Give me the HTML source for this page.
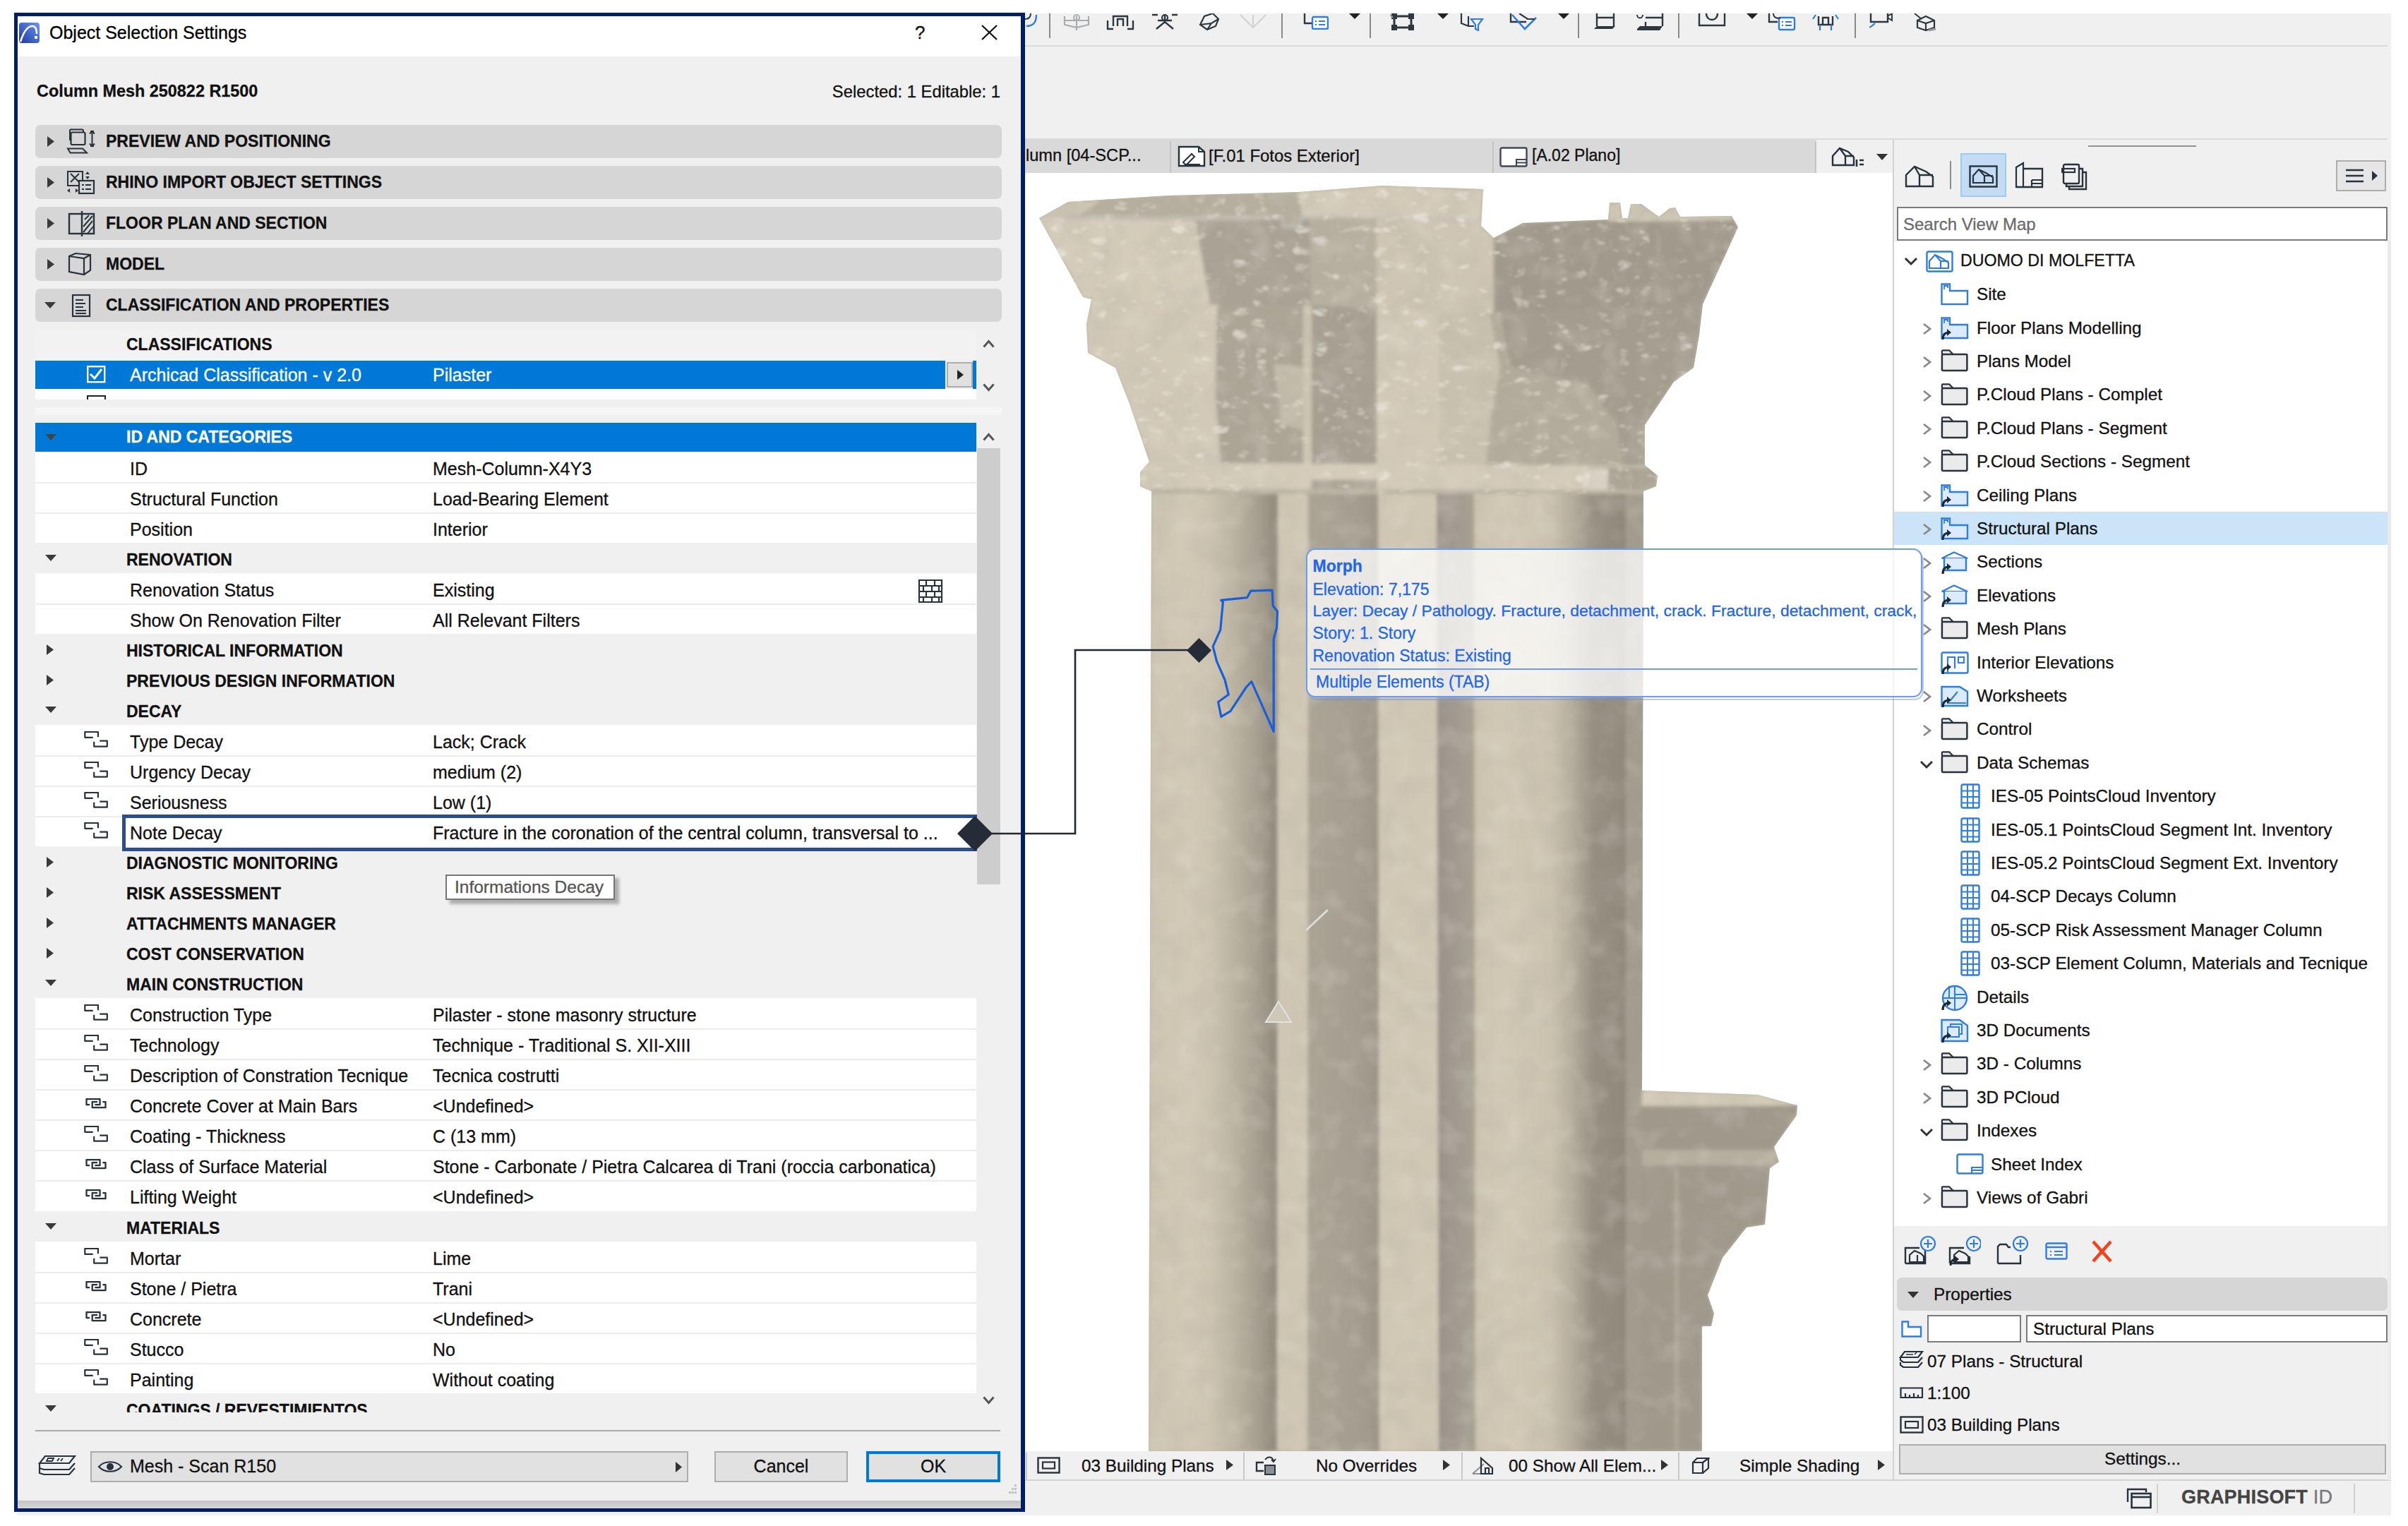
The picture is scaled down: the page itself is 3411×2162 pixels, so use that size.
<!DOCTYPE html>
<html><head><meta charset="utf-8"><style>
*{margin:0;padding:0;box-sizing:border-box}
html,body{width:3411px;height:2162px;overflow:hidden;background:#fff}
body{position:relative;font-family:"Liberation Sans",sans-serif;color:#000}
.a{position:absolute;display:block}
.t{position:absolute;white-space:nowrap;line-height:1;-webkit-text-stroke:0.3px currentColor}
</style></head><body>
<div class="a" style="left:24px;top:19px;width:3363px;height:2128px;background:#f0f0f0"></div>
<div class="a" style="left:1452px;top:64px;width:1930px;height:2px;background:#d9d9d9"></div>
<div class="a" style="left:1452px;top:196px;width:1930px;height:2px;background:#dadada"></div>
<div class="a" style="left:1452px;top:196px;width:1120px;height:49px;background:#d9d9d9"></div>
<div class="a" style="left:1657px;top:200px;width:2px;height:45px;background:#c4c4c4"></div>
<div class="a" style="left:2114px;top:200px;width:2px;height:45px;background:#c4c4c4"></div>
<div class="a" style="left:2571px;top:200px;width:2px;height:45px;background:#c4c4c4"></div>
<div class="a" style="left:1452px;top:245px;width:1230px;height:1811px;background:#ffffff"></div>
<div class="a" style="left:1452px;top:2056px;width:1230px;height:41px;background:#f0f0f0"></div>
<div class="a" style="left:1452px;top:2096px;width:1935px;height:2px;background:#d4d4d4"></div>
<div class="a" style="left:1453px;top:2058px;width:2px;height:38px;background:#c8c8c8"></div>
<div class="a" style="left:1761px;top:2058px;width:2px;height:38px;background:#c8c8c8"></div>
<div class="a" style="left:2070px;top:2058px;width:2px;height:38px;background:#c8c8c8"></div>
<div class="a" style="left:2377px;top:2058px;width:2px;height:38px;background:#c8c8c8"></div>
<div class="a" style="left:2681px;top:198px;width:2px;height:1899px;background:#d2d2d2"></div>
<div class="a" style="left:3382px;top:341px;width:5px;height:1756px;background:#ebebeb"></div>
<svg class="a" style="left:1452px;top:245px;" width="1230" height="1811" viewBox="1452 245 1230 1811"><defs>
<clipPath id="silc"><polygon points="1472,309 1513,286 1656,277 1840,272 1958,263 2101,268 2098,320 2116,337 2157,316 2278,311 2280,287 2295,287 2298,309 2306,309 2310,289 2325,289 2340,300 2350,307 2365,295 2373,294 2380,307 2453,306 2462,322 2412,431 2407,475 2399,521 2371,541 2330,602 2330,659 2348,674 2346,689 2328,696 2326,1545 2490,1551 2546,1566 2545,1580 2513,1625 2520,1646 2507,1655 2500,1735 2474,1739 2440,1782 2419,1835 2428,1861 2424,1879 2411,1879 2411,2056 1627,2056 1631,696 1615,689 1615,669 1628,654 1600,572 1580,521 1541,500 1539,459 1546,424 1534,421"/></clipPath>
<linearGradient id="cylL" x1="0" x2="1" y1="0" y2="0">
 <stop offset="0" stop-color="#cdc4b1"/><stop offset="0.3" stop-color="#d2c9b6"/><stop offset="0.47" stop-color="#cdc4b1"/><stop offset="0.64" stop-color="#bdb5a3"/><stop offset="0.82" stop-color="#a8a192"/><stop offset="0.95" stop-color="#948e81"/><stop offset="1" stop-color="#918b7e"/></linearGradient>
<linearGradient id="cylR" x1="0" x2="1" y1="0" y2="0">
 <stop offset="0" stop-color="#cbc2af"/><stop offset="0.2" stop-color="#d1c8b5"/><stop offset="0.5" stop-color="#cbc2af"/><stop offset="0.65" stop-color="#b3ac9c"/><stop offset="0.78" stop-color="#958f82"/><stop offset="1" stop-color="#8f897c"/></linearGradient>
<linearGradient id="darkS2" x1="0" x2="1" y1="0" y2="0">
 <stop offset="0" stop-color="#98928a"/><stop offset="1" stop-color="#a7a193"/></linearGradient>
<linearGradient id="darkS" x1="0" x2="1" y1="0" y2="0">
 <stop offset="0" stop-color="#aaa495"/><stop offset="0.7" stop-color="#a39d8f"/><stop offset="1" stop-color="#9a9488"/></linearGradient>
<filter id="tex" x="1452" y="245" width="1230" height="1811" filterUnits="userSpaceOnUse">
 <feTurbulence type="fractalNoise" baseFrequency="0.022" numOctaves="2" seed="7" result="n"/>
 <feColorMatrix in="n" type="matrix" values="0 0 0 0 0.45  0 0 0 0 0.42  0 0 0 0 0.37  1.6 0 0 0 -0.72" result="dk"/>
 <feComposite in="dk" in2="SourceAlpha" operator="in"/>
</filter>
<filter id="tex2" x="1452" y="245" width="1230" height="1811" filterUnits="userSpaceOnUse">
 <feTurbulence type="fractalNoise" baseFrequency="0.03" numOctaves="2" seed="21" result="n"/>
 <feColorMatrix in="n" type="matrix" values="0 0 0 0 0.88  0 0 0 0 0.85  0 0 0 0 0.78  0 1.6 0 0 -0.78" result="lt"/>
 <feComposite in="lt" in2="SourceAlpha" operator="in"/>
</filter>
<clipPath id="capc"><polygon points="1452,245 2682,245 2682,700 1452,700"/></clipPath>
<filter id="leafL" x="1452" y="245" width="1230" height="460" filterUnits="userSpaceOnUse">
 <feTurbulence type="turbulence" baseFrequency="0.035 0.06" numOctaves="2" seed="11" result="n"/>
 <feColorMatrix in="n" type="matrix" values="0 0 0 0 0.86  0 0 0 0 0.83  0 0 0 0 0.76  0 0 3.2 0 -1.25" result="lt"/>
 <feGaussianBlur stdDeviation="1.2"/>
 <feComposite in2="SourceAlpha" operator="in"/>
</filter>
<filter id="leafD" x="1452" y="245" width="1230" height="460" filterUnits="userSpaceOnUse">
 <feTurbulence type="turbulence" baseFrequency="0.05 0.03" numOctaves="2" seed="5" result="n"/>
 <feColorMatrix in="n" type="matrix" values="0 0 0 0 0.55  0 0 0 0 0.52  0 0 0 0 0.47  0 3.0 0 0 -1.2" result="dk"/>
 <feGaussianBlur stdDeviation="1.2"/>
 <feComposite in2="SourceAlpha" operator="in"/>
</filter>
<filter id="soft" x="1452" y="245" width="1230" height="1811" filterUnits="userSpaceOnUse"><feGaussianBlur stdDeviation="2.5"/></filter>
</defs><polygon points="1472,309 1513,286 1656,277 1840,272 1958,263 2101,268 2098,320 2116,337 2157,316 2278,311 2280,287 2295,287 2298,309 2306,309 2310,289 2325,289 2340,300 2350,307 2365,295 2373,294 2380,307 2453,306 2462,322 2412,431 2407,475 2399,521 2371,541 2330,602 2330,659 2348,674 2346,689 2328,696 2326,1545 2490,1551 2546,1566 2545,1580 2513,1625 2520,1646 2507,1655 2500,1735 2474,1739 2440,1782 2419,1835 2428,1861 2424,1879 2411,1879 2411,2056 1627,2056 1631,696 1615,689 1615,669 1628,654 1600,572 1580,521 1541,500 1539,459 1546,424 1534,421" fill="#c0b8a7" /><g clip-path="url(#silc)"><g filter="url(#soft)"><polygon points="1631,690 1811,690 1811,2056 1627,2056" fill="url(#cylL)" /><polygon points="1810,690 1853,690 1852,2056 1809,2056" fill="#cfc6b3" /><polygon points="1853,690 1953,690 1955,2056 1852,2056" fill="url(#darkS)" /><polygon points="1952,690 2037,690 2040,2056 1954,2056" fill="#d0c7b4" /><polygon points="2035,690 2088,690 2090,2056 2038,2056" fill="url(#darkS2)" /><polygon points="2088,690 2304,690 2304,2056 2090,2056" fill="url(#cylR)" /><polygon points="2303,690 2330,690 2330,2056 2303,2056" fill="#a29c8e" /><polygon points="2324,1560 2546,1566 2545,1580 2513,1625 2520,1646 2507,1655 2500,1735 2474,1739 2440,1782 2419,1835 2428,1861 2424,1879 2411,1879 2411,2056 2324,2056" fill="#9f998c" /><polygon points="2326,1545 2490,1551 2546,1566 2470,1567 2326,1567" fill="#d2c9b6" /><polygon points="2326,1629 2516,1629 2516,1651 2326,1651" fill="#b6af9f" /><polygon points="2372,1655 2378,1655 2378,2056 2372,2056" fill="#aea898" /><polygon points="1546,424 2412,431 2407,475 2399,521 2371,541 2330,602 2330,659 2348,674 2346,689 2328,696 1631,696 1615,689 1615,669 1628,654 1600,572 1580,521 1541,500 1539,459" fill="#d2c9b7" /><polygon points="1724,430 1850,430 1850,662 1730,662 1722,560" fill="#aba596" /><polygon points="1846,430 1858,430 1858,662 1846,662" fill="#cdc5b3" /><polygon points="1804,515 1846,520 1846,610 1815,600" fill="#c2baa9" /><polygon points="1858,430 1950,432 1950,662 1858,662" fill="#a5a092" /><polygon points="1950,432 2038,434 2038,662 1950,662" fill="#d2c9b7" /><polygon points="2038,434 2124,440 2140,520 2300,540 2300,664 2038,664" fill="#b2ab9b" /><polygon points="2124,440 2412,431 2407,475 2399,521 2371,541 2330,602 2330,659 2300,664 2290,600 2250,545 2140,520" fill="#a39d8f" /><polygon points="2038,440 2110,445 2125,520 2112,590 2105,664 2038,664" fill="#c9c1af" /><polygon points="1615,655 2346,660 2348,674 2346,689 2328,696 1631,696 1615,689" fill="#d4cbb9" /><polygon points="1858,680 1950,680 1950,697 1858,697" fill="#aaa496" /><polygon points="2249,662 2346,662 2348,674 2346,689 2328,696 2249,696" fill="#aba596" /><polygon points="2242,664 2278,664 2278,694 2242,694" fill="#d8d2c4" /><polygon points="1631,692 2330,694 2330,700 1631,700" fill="#bcb5a5" /><polygon points="1472,309 1694,313 1714,432 1534,421" fill="#d4cbb9" /><polygon points="1694,313 1855,311 1858,432 1714,432" fill="#a9a395" /><polygon points="1855,311 1950,309 1950,438 1858,432" fill="#b7b0a0" /><polygon points="1950,309 2098,310 2098,320 2116,337 2116,444 1950,438" fill="#cec5b3" /><polygon points="2116,337 2157,316 2453,306 2462,322 2412,431 2116,444" fill="#a09a8c" /><polygon points="1472,309 1513,286 1656,277 1840,272 1958,263 2101,268 2098,310 1845,306 1840,322 1817,322 1817,306 1628,309" fill="#b6af9f" /><polygon points="1838,272 1958,263 2101,268 2098,310 1845,306" fill="#d3cab7" /><polygon points="1472,309 1513,286 1560,284 1530,305" fill="#cdc4b1" /><polygon points="2278,311 2280,287 2295,287 2298,309 2306,309 2310,289 2325,289 2340,300 2350,307 2365,295 2373,294 2380,307 2453,306 2453,312 2278,314" fill="#cec6b3" /><polyline points="1472,309 1585,306 1628,309 1817,306 1817,322 1840,322 1845,306 2098,310" fill="none" stroke="#c6c6c6" stroke-width="2"/></g></g><g clip-path="url(#silc)"><rect x="1452" y="245" width="1230" height="1811" fill="#000" filter="url(#tex)" opacity="0.35"/></g><g clip-path="url(#silc)"><rect x="1452" y="245" width="1230" height="1811" fill="#000" filter="url(#tex2)" opacity="0.3"/></g><g clip-path="url(#silc)"><g clip-path="url(#capc)"><rect x="1452" y="245" width="1230" height="460" fill="#000" filter="url(#leafL)" opacity="0.6"/><rect x="1452" y="245" width="1230" height="460" fill="#000" filter="url(#leafD)" opacity="0.35"/></g></g></svg>
<div class="a" style="left:20px;top:18px;width:1432px;height:2124px;background:#021f60"></div>
<div class="a" style="left:25px;top:23px;width:1421px;height:57px;background:#ffffff"></div>
<div class="a" style="left:25px;top:80px;width:1421px;height:2046px;background:#f0f0f0"></div>
<div class="a" style="left:25px;top:2126px;width:1421px;height:11px;background:linear-gradient(#c4c4c4,#d6d6d6)"></div>
<svg class="a" style="left:26px;top:31px;" width="31" height="31" viewBox="0 0 31 31"><defs><linearGradient id="tig" x1="0" y1="1" x2="1" y2="0"><stop offset="0" stop-color="#1c3aa8"/><stop offset="1" stop-color="#6d95f0"/></linearGradient></defs><rect x="1" y="1" width="29" height="29" rx="4" fill="url(#tig)"/><path d="M3,28 C8,12 14,6 20,6 C25,6 26,12 26,17" fill="none" stroke="#fff" stroke-width="2.6"/><rect x="23" y="20" width="4" height="4" fill="#fff"/></svg>
<div class="t" style="left:70px;top:34.1px;font-size:25px;font-weight:400;color:#000;">Object Selection Settings</div>
<div class="t" style="left:1296px;top:32.9px;font-size:26px;font-weight:400;color:#111;">?</div>
<svg class="a" style="left:1390px;top:35px;" width="23" height="22" viewBox="0 0 23 22"><path d="M1,1 L22,21 M22,1 L1,21" stroke="#111" stroke-width="2.2"/></svg>
<div class="t" style="left:52px;top:117.7px;font-size:23.4px;font-weight:700;color:#111;">Column Mesh 250822 R1500</div>
<div class="t" style="right:1994px;top:117.7px;font-size:23.8px;font-weight:400;color:#111;">Selected: 1 Editable: 1</div>
<div class="a" style="left:50px;top:177px;width:1369px;height:47px;background:#d6d6d6;border-radius:7px"></div>
<svg class="a" style="left:67px;top:192.5px;" width="10" height="15" viewBox="0 0 10 15"><polygon points="0,0 10,7.5 0,15" fill="#3a3a3a"/></svg>
<div class="t" style="left:150px;top:189.4px;font-size:23px;font-weight:700;color:#111;">PREVIEW AND POSITIONING</div>
<div class="a" style="left:50px;top:235px;width:1369px;height:47px;background:#d6d6d6;border-radius:7px"></div>
<svg class="a" style="left:67px;top:250.5px;" width="10" height="15" viewBox="0 0 10 15"><polygon points="0,0 10,7.5 0,15" fill="#3a3a3a"/></svg>
<div class="t" style="left:150px;top:247.4px;font-size:23px;font-weight:700;color:#111;">RHINO IMPORT OBJECT SETTINGS</div>
<div class="a" style="left:50px;top:293px;width:1369px;height:47px;background:#d6d6d6;border-radius:7px"></div>
<svg class="a" style="left:67px;top:308.5px;" width="10" height="15" viewBox="0 0 10 15"><polygon points="0,0 10,7.5 0,15" fill="#3a3a3a"/></svg>
<div class="t" style="left:150px;top:305.4px;font-size:23px;font-weight:700;color:#111;">FLOOR PLAN AND SECTION</div>
<div class="a" style="left:50px;top:351px;width:1369px;height:47px;background:#d6d6d6;border-radius:7px"></div>
<svg class="a" style="left:67px;top:366.5px;" width="10" height="15" viewBox="0 0 10 15"><polygon points="0,0 10,7.5 0,15" fill="#3a3a3a"/></svg>
<div class="t" style="left:150px;top:363.4px;font-size:23px;font-weight:700;color:#111;">MODEL</div>
<div class="a" style="left:50px;top:409px;width:1369px;height:47px;background:#d6d6d6;border-radius:7px"></div>
<svg class="a" style="left:62.5px;top:427.5px;" width="16" height="9" viewBox="0 0 16 9"><polygon points="0,0 16,0 8.0,9" fill="#3a3a3a"/></svg>
<div class="t" style="left:150px;top:421.4px;font-size:23px;font-weight:700;color:#111;">CLASSIFICATION AND PROPERTIES</div>
<svg class="a" style="left:94px;top:182px;" width="44" height="37" viewBox="0 0 44 37"><path d="M5,17 V3 Q5,1.5 6.5,1.5 H22 Q24,1.5 24,3.5 V5" fill="none" stroke="#27323c" stroke-width="2"/><rect x="6.5" y="5.5" width="20" height="17.5" rx="2" fill="none" stroke="#27323c" stroke-width="2.2"/><path d="M2,28.5 H23 L29,34.5 H5.5 Z" fill="none" stroke="#27323c" stroke-width="2"/><path d="M36.5,4 V25 M33,7.5 L36.5,4 L40,7.5 M33,21.5 L36.5,25 L40,21.5 M34,4 H39 M34,25 H39" fill="none" stroke="#27323c" stroke-width="2"/></svg>
<svg class="a" style="left:94px;top:241px;" width="42" height="36" viewBox="0 0 42 36"><path d="M2,2 H23 V22 H2 Z M6,5 L18,17 M18,5 L6,17" fill="none" stroke="#27323c" stroke-width="2"/><rect x="18" y="15" width="21" height="18" fill="#d6d6d6" stroke="#27323c" stroke-width="2.2"/><path d="M22,21 H25 M27,21 H35 M22,27 H25 M27,27 H35" stroke="#27323c" stroke-width="2"/><path d="M30,2 L33,6 H27 Z M27,9 H33 L30,13 Z M1,29 L5,26 V32 Z M13,26 L17,29 L13,32 Z" fill="#27323c"/></svg>
<svg class="a" style="left:96px;top:299px;" width="40" height="36" viewBox="0 0 40 36"><rect x="2" y="4" width="35" height="28" fill="none" stroke="#27323c" stroke-width="2.4"/><path d="M20,0 V36" stroke="#27323c" stroke-width="2.4"/><path d="M22,30 L35,14 M22,22 L35,7 M24,12 L30,6 M28,32 L36,22" stroke="#27323c" stroke-width="2"/></svg>
<svg class="a" style="left:96px;top:357px;" width="36" height="34" viewBox="0 0 36 34"><path d="M2,6 L11,2 L32,4 V26 L23,32 L2,28 Z M2,6 L23,9 L32,4 M23,9 V32" fill="none" stroke="#27323c" stroke-width="2.2"/></svg>
<svg class="a" style="left:101px;top:416px;" width="28" height="34" viewBox="0 0 28 34"><rect x="2" y="2" width="24" height="30" fill="none" stroke="#27323c" stroke-width="2.2"/><path d="M6,9 H17 M6,14 H20 M6,19 H17 M6,24 H21 M6,28 H21" stroke="#27323c" stroke-width="2"/></svg>
<div class="a" style="left:50px;top:467px;width:1333px;height:44px;background:#f2f2f2"></div>
<div class="t" style="left:179px;top:477.4px;font-size:23px;font-weight:700;color:#111;">CLASSIFICATIONS</div>
<div class="a" style="left:50px;top:511px;width:1289px;height:40px;background:#0078d7"></div>
<div class="a" style="left:1378px;top:511px;width:5px;height:40px;background:#0078d7"></div>
<div class="a" style="left:1341px;top:513px;width:37px;height:36px;background:#e1e1e1;border:2px solid #adadad"></div>
<svg class="a" style="left:1356px;top:524.0px;" width="9" height="14" viewBox="0 0 9 14"><polygon points="0,0 9,7.0 0,14" fill="#222"/></svg>
<svg class="a" style="left:123px;top:518px;" width="27" height="25" viewBox="0 0 27 25"><rect x="1.2" y="1.2" width="24" height="22" fill="none" stroke="#fff" stroke-width="2.4"/><path d="M5,12 L11,18 L21,5" fill="none" stroke="#fff" stroke-width="3"/></svg>
<div class="t" style="left:184px;top:519.1px;font-size:25px;font-weight:400;color:#fff;">Archicad Classification - v 2.0</div>
<div class="t" style="left:613px;top:519.1px;font-size:25px;font-weight:400;color:#fff;">Pilaster</div>
<div class="a" style="left:50px;top:551px;width:1333px;height:15px;background:#fff"></div>
<div class="a" style="left:123px;top:560px;width:27px;height:6px;border:2px solid #222;border-bottom:none"></div>
<svg class="a" style="left:1392px;top:481px;" width="17" height="12" viewBox="0 0 17 12"><polyline points="1.5,10.5 8.5,2.5 15.5,10.5" fill="none" stroke="#555" stroke-width="3"/></svg>
<svg class="a" style="left:1392px;top:543px;" width="17" height="12" viewBox="0 0 17 12"><polyline points="1.5,1.5 8.5,9.5 15.5,1.5" fill="none" stroke="#555" stroke-width="3"/></svg>
<div class="a" style="left:50px;top:577px;width:1369px;height:11px;background:#f6f6f6"></div>
<div class="a" style="left:50px;top:599px;width:1333px;height:41px;background:#0078d7"></div>
<svg class="a" style="left:64.0px;top:615px;" width="16" height="9" viewBox="0 0 16 9"><polygon points="0,0 16,0 8.0,9" fill="#444"/></svg>
<div class="t" style="left:179px;top:608.4px;font-size:23px;font-weight:700;color:#fff;">ID AND CATEGORIES</div>
<div class="a" style="left:50px;top:640px;width:1333px;height:43px;background:#fff"></div>
<div class="t" style="left:184px;top:651.9px;font-size:25px;font-weight:400;color:#111;">ID</div>
<div class="t" style="left:613px;top:651.9px;font-size:25px;font-weight:400;color:#111;">Mesh-Column-X4Y3</div>
<div class="a" style="left:50px;top:683px;width:1333px;height:43px;background:#fff"></div>
<div class="a" style="left:50px;top:683px;width:1333px;height:2px;background:#ececec"></div>
<div class="t" style="left:184px;top:694.9px;font-size:25px;font-weight:400;color:#111;">Structural Function</div>
<div class="t" style="left:613px;top:694.9px;font-size:25px;font-weight:400;color:#111;">Load-Bearing Element</div>
<div class="a" style="left:50px;top:726px;width:1333px;height:43px;background:#fff"></div>
<div class="a" style="left:50px;top:726px;width:1333px;height:2px;background:#ececec"></div>
<div class="t" style="left:184px;top:737.9px;font-size:25px;font-weight:400;color:#111;">Position</div>
<div class="t" style="left:613px;top:737.9px;font-size:25px;font-weight:400;color:#111;">Interior</div>
<div class="a" style="left:50px;top:769px;width:1333px;height:43px;background:#f0f0f0"></div>
<svg class="a" style="left:64.0px;top:786px;" width="16" height="9" viewBox="0 0 16 9"><polygon points="0,0 16,0 8.0,9" fill="#3a3a3a"/></svg>
<div class="t" style="left:179px;top:781.9px;font-size:23px;font-weight:700;color:#111;">RENOVATION</div>
<div class="a" style="left:50px;top:812px;width:1333px;height:43px;background:#fff"></div>
<div class="t" style="left:184px;top:823.9px;font-size:25px;font-weight:400;color:#111;">Renovation Status</div>
<div class="t" style="left:613px;top:823.9px;font-size:25px;font-weight:400;color:#111;">Existing</div>
<div class="a" style="left:50px;top:855px;width:1333px;height:43px;background:#fff"></div>
<div class="a" style="left:50px;top:855px;width:1333px;height:2px;background:#ececec"></div>
<div class="t" style="left:184px;top:866.9px;font-size:25px;font-weight:400;color:#111;">Show On Renovation Filter</div>
<div class="t" style="left:613px;top:866.9px;font-size:25px;font-weight:400;color:#111;">All Relevant Filters</div>
<div class="a" style="left:50px;top:898px;width:1333px;height:43px;background:#f0f0f0"></div>
<svg class="a" style="left:66px;top:912.5px;" width="10" height="15" viewBox="0 0 10 15"><polygon points="0,0 10,7.5 0,15" fill="#3a3a3a"/></svg>
<div class="t" style="left:179px;top:910.9px;font-size:23px;font-weight:700;color:#111;">HISTORICAL INFORMATION</div>
<div class="a" style="left:50px;top:941px;width:1333px;height:43px;background:#f0f0f0"></div>
<svg class="a" style="left:66px;top:955.5px;" width="10" height="15" viewBox="0 0 10 15"><polygon points="0,0 10,7.5 0,15" fill="#3a3a3a"/></svg>
<div class="t" style="left:179px;top:953.9px;font-size:23px;font-weight:700;color:#111;">PREVIOUS DESIGN INFORMATION</div>
<div class="a" style="left:50px;top:984px;width:1333px;height:43px;background:#f0f0f0"></div>
<svg class="a" style="left:64.0px;top:1001px;" width="16" height="9" viewBox="0 0 16 9"><polygon points="0,0 16,0 8.0,9" fill="#3a3a3a"/></svg>
<div class="t" style="left:179px;top:996.9px;font-size:23px;font-weight:700;color:#111;">DECAY</div>
<div class="a" style="left:50px;top:1027px;width:1333px;height:43px;background:#fff"></div>
<div class="t" style="left:184px;top:1038.9px;font-size:25px;font-weight:400;color:#111;">Type Decay</div>
<div class="t" style="left:613px;top:1038.9px;font-size:25px;font-weight:400;color:#111;">Lack; Crack</div>
<svg class="a" style="left:118px;top:1036px;" width="36" height="24" viewBox="0 0 36 24"><path d="M13.7,8.8 H2.3 V1 H20.9 V8.3 M23.3,13.6 H33.8 V21.6 H15.2 V14.7" fill="none" stroke="#27323c" stroke-width="2.2" stroke-linejoin="round"/></svg>
<div class="a" style="left:50px;top:1070px;width:1333px;height:43px;background:#fff"></div>
<div class="a" style="left:50px;top:1070px;width:1333px;height:2px;background:#ececec"></div>
<div class="t" style="left:184px;top:1081.9px;font-size:25px;font-weight:400;color:#111;">Urgency Decay</div>
<div class="t" style="left:613px;top:1081.9px;font-size:25px;font-weight:400;color:#111;">medium (2)</div>
<svg class="a" style="left:118px;top:1079px;" width="36" height="24" viewBox="0 0 36 24"><path d="M13.7,8.8 H2.3 V1 H20.9 V8.3 M23.3,13.6 H33.8 V21.6 H15.2 V14.7" fill="none" stroke="#27323c" stroke-width="2.2" stroke-linejoin="round"/></svg>
<div class="a" style="left:50px;top:1113px;width:1333px;height:43px;background:#fff"></div>
<div class="a" style="left:50px;top:1113px;width:1333px;height:2px;background:#ececec"></div>
<div class="t" style="left:184px;top:1124.9px;font-size:25px;font-weight:400;color:#111;">Seriousness</div>
<div class="t" style="left:613px;top:1124.9px;font-size:25px;font-weight:400;color:#111;">Low (1)</div>
<svg class="a" style="left:118px;top:1122px;" width="36" height="24" viewBox="0 0 36 24"><path d="M13.7,8.8 H2.3 V1 H20.9 V8.3 M23.3,13.6 H33.8 V21.6 H15.2 V14.7" fill="none" stroke="#27323c" stroke-width="2.2" stroke-linejoin="round"/></svg>
<div class="a" style="left:50px;top:1156px;width:1333px;height:43px;background:#fff"></div>
<div class="a" style="left:50px;top:1156px;width:1333px;height:2px;background:#ececec"></div>
<div class="t" style="left:184px;top:1167.9px;font-size:25px;font-weight:400;color:#111;">Note Decay</div>
<div class="t" style="left:613px;top:1167.9px;font-size:25px;font-weight:400;color:#111;">Fracture in the coronation of the central column, transversal to ...</div>
<svg class="a" style="left:118px;top:1165px;" width="36" height="24" viewBox="0 0 36 24"><path d="M13.7,8.8 H2.3 V1 H20.9 V8.3 M23.3,13.6 H33.8 V21.6 H15.2 V14.7" fill="none" stroke="#27323c" stroke-width="2.2" stroke-linejoin="round"/></svg>
<div class="a" style="left:50px;top:1199px;width:1333px;height:43px;background:#f0f0f0"></div>
<svg class="a" style="left:66px;top:1213.5px;" width="10" height="15" viewBox="0 0 10 15"><polygon points="0,0 10,7.5 0,15" fill="#3a3a3a"/></svg>
<div class="t" style="left:179px;top:1211.9px;font-size:23px;font-weight:700;color:#111;">DIAGNOSTIC MONITORING</div>
<div class="a" style="left:50px;top:1242px;width:1333px;height:43px;background:#f0f0f0"></div>
<svg class="a" style="left:66px;top:1256.5px;" width="10" height="15" viewBox="0 0 10 15"><polygon points="0,0 10,7.5 0,15" fill="#3a3a3a"/></svg>
<div class="t" style="left:179px;top:1254.9px;font-size:23px;font-weight:700;color:#111;">RISK ASSESSMENT</div>
<div class="a" style="left:50px;top:1285px;width:1333px;height:43px;background:#f0f0f0"></div>
<svg class="a" style="left:66px;top:1299.5px;" width="10" height="15" viewBox="0 0 10 15"><polygon points="0,0 10,7.5 0,15" fill="#3a3a3a"/></svg>
<div class="t" style="left:179px;top:1297.9px;font-size:23px;font-weight:700;color:#111;">ATTACHMENTS MANAGER</div>
<div class="a" style="left:50px;top:1328px;width:1333px;height:43px;background:#f0f0f0"></div>
<svg class="a" style="left:66px;top:1342.5px;" width="10" height="15" viewBox="0 0 10 15"><polygon points="0,0 10,7.5 0,15" fill="#3a3a3a"/></svg>
<div class="t" style="left:179px;top:1340.9px;font-size:23px;font-weight:700;color:#111;">COST CONSERVATION</div>
<div class="a" style="left:50px;top:1371px;width:1333px;height:43px;background:#f0f0f0"></div>
<svg class="a" style="left:64.0px;top:1388px;" width="16" height="9" viewBox="0 0 16 9"><polygon points="0,0 16,0 8.0,9" fill="#3a3a3a"/></svg>
<div class="t" style="left:179px;top:1383.9px;font-size:23px;font-weight:700;color:#111;">MAIN CONSTRUCTION</div>
<div class="a" style="left:50px;top:1414px;width:1333px;height:43px;background:#fff"></div>
<div class="t" style="left:184px;top:1425.9px;font-size:25px;font-weight:400;color:#111;">Construction Type</div>
<div class="t" style="left:613px;top:1425.9px;font-size:25px;font-weight:400;color:#111;">Pilaster - stone masonry structure</div>
<svg class="a" style="left:118px;top:1423px;" width="36" height="24" viewBox="0 0 36 24"><path d="M13.7,8.8 H2.3 V1 H20.9 V8.3 M23.3,13.6 H33.8 V21.6 H15.2 V14.7" fill="none" stroke="#27323c" stroke-width="2.2" stroke-linejoin="round"/></svg>
<div class="a" style="left:50px;top:1457px;width:1333px;height:43px;background:#fff"></div>
<div class="a" style="left:50px;top:1457px;width:1333px;height:2px;background:#ececec"></div>
<div class="t" style="left:184px;top:1468.9px;font-size:25px;font-weight:400;color:#111;">Technology</div>
<div class="t" style="left:613px;top:1468.9px;font-size:25px;font-weight:400;color:#111;">Technique - Traditional S. XII-XIII</div>
<svg class="a" style="left:118px;top:1466px;" width="36" height="24" viewBox="0 0 36 24"><path d="M13.7,8.8 H2.3 V1 H20.9 V8.3 M23.3,13.6 H33.8 V21.6 H15.2 V14.7" fill="none" stroke="#27323c" stroke-width="2.2" stroke-linejoin="round"/></svg>
<div class="a" style="left:50px;top:1500px;width:1333px;height:43px;background:#fff"></div>
<div class="a" style="left:50px;top:1500px;width:1333px;height:2px;background:#ececec"></div>
<div class="t" style="left:184px;top:1511.9px;font-size:25px;font-weight:400;color:#111;">Description of Constration Tecnique</div>
<div class="t" style="left:613px;top:1511.9px;font-size:25px;font-weight:400;color:#111;">Tecnica costrutti</div>
<svg class="a" style="left:118px;top:1509px;" width="36" height="24" viewBox="0 0 36 24"><path d="M13.7,8.8 H2.3 V1 H20.9 V8.3 M23.3,13.6 H33.8 V21.6 H15.2 V14.7" fill="none" stroke="#27323c" stroke-width="2.2" stroke-linejoin="round"/></svg>
<div class="a" style="left:50px;top:1543px;width:1333px;height:43px;background:#fff"></div>
<div class="a" style="left:50px;top:1543px;width:1333px;height:2px;background:#ececec"></div>
<div class="t" style="left:184px;top:1554.9px;font-size:25px;font-weight:400;color:#111;">Concrete Cover at Main Bars</div>
<div class="t" style="left:613px;top:1554.9px;font-size:25px;font-weight:400;color:#111;">&lt;Undefined&gt;</div>
<svg class="a" style="left:120px;top:1555px;" width="32" height="17" viewBox="0 0 32 17"><path d="M7,10.2 H2.5 V2.2 H21.5 V10.2 H14.4 M18,6.1 H10.7 V14.2 H29.5 V6.1 H25.4" fill="none" stroke="#27323c" stroke-width="2.3" stroke-linejoin="round"/></svg>
<div class="a" style="left:50px;top:1586px;width:1333px;height:43px;background:#fff"></div>
<div class="a" style="left:50px;top:1586px;width:1333px;height:2px;background:#ececec"></div>
<div class="t" style="left:184px;top:1597.9px;font-size:25px;font-weight:400;color:#111;">Coating - Thickness</div>
<div class="t" style="left:613px;top:1597.9px;font-size:25px;font-weight:400;color:#111;">C (13 mm)</div>
<svg class="a" style="left:118px;top:1595px;" width="36" height="24" viewBox="0 0 36 24"><path d="M13.7,8.8 H2.3 V1 H20.9 V8.3 M23.3,13.6 H33.8 V21.6 H15.2 V14.7" fill="none" stroke="#27323c" stroke-width="2.2" stroke-linejoin="round"/></svg>
<div class="a" style="left:50px;top:1629px;width:1333px;height:43px;background:#fff"></div>
<div class="a" style="left:50px;top:1629px;width:1333px;height:2px;background:#ececec"></div>
<div class="t" style="left:184px;top:1640.9px;font-size:25px;font-weight:400;color:#111;">Class of Surface Material</div>
<div class="t" style="left:613px;top:1640.9px;font-size:25px;font-weight:400;color:#111;">Stone - Carbonate / Pietra Calcarea di Trani (roccia carbonatica)</div>
<svg class="a" style="left:120px;top:1641px;" width="32" height="17" viewBox="0 0 32 17"><path d="M7,10.2 H2.5 V2.2 H21.5 V10.2 H14.4 M18,6.1 H10.7 V14.2 H29.5 V6.1 H25.4" fill="none" stroke="#27323c" stroke-width="2.3" stroke-linejoin="round"/></svg>
<div class="a" style="left:50px;top:1672px;width:1333px;height:44px;background:#fff"></div>
<div class="a" style="left:50px;top:1672px;width:1333px;height:2px;background:#ececec"></div>
<div class="t" style="left:184px;top:1683.9px;font-size:25px;font-weight:400;color:#111;">Lifting Weight</div>
<div class="t" style="left:613px;top:1683.9px;font-size:25px;font-weight:400;color:#111;">&lt;Undefined&gt;</div>
<svg class="a" style="left:120px;top:1684px;" width="32" height="17" viewBox="0 0 32 17"><path d="M7,10.2 H2.5 V2.2 H21.5 V10.2 H14.4 M18,6.1 H10.7 V14.2 H29.5 V6.1 H25.4" fill="none" stroke="#27323c" stroke-width="2.3" stroke-linejoin="round"/></svg>
<div class="a" style="left:50px;top:1716px;width:1333px;height:43px;background:#f0f0f0"></div>
<svg class="a" style="left:64.0px;top:1733px;" width="16" height="9" viewBox="0 0 16 9"><polygon points="0,0 16,0 8.0,9" fill="#3a3a3a"/></svg>
<div class="t" style="left:179px;top:1728.9px;font-size:23px;font-weight:700;color:#111;">MATERIALS</div>
<div class="a" style="left:50px;top:1759px;width:1333px;height:43px;background:#fff"></div>
<div class="t" style="left:184px;top:1770.9px;font-size:25px;font-weight:400;color:#111;">Mortar</div>
<div class="t" style="left:613px;top:1770.9px;font-size:25px;font-weight:400;color:#111;">Lime</div>
<svg class="a" style="left:118px;top:1768px;" width="36" height="24" viewBox="0 0 36 24"><path d="M13.7,8.8 H2.3 V1 H20.9 V8.3 M23.3,13.6 H33.8 V21.6 H15.2 V14.7" fill="none" stroke="#27323c" stroke-width="2.2" stroke-linejoin="round"/></svg>
<div class="a" style="left:50px;top:1802px;width:1333px;height:43px;background:#fff"></div>
<div class="a" style="left:50px;top:1802px;width:1333px;height:2px;background:#ececec"></div>
<div class="t" style="left:184px;top:1813.9px;font-size:25px;font-weight:400;color:#111;">Stone / Pietra</div>
<div class="t" style="left:613px;top:1813.9px;font-size:25px;font-weight:400;color:#111;">Trani</div>
<svg class="a" style="left:120px;top:1814px;" width="32" height="17" viewBox="0 0 32 17"><path d="M7,10.2 H2.5 V2.2 H21.5 V10.2 H14.4 M18,6.1 H10.7 V14.2 H29.5 V6.1 H25.4" fill="none" stroke="#27323c" stroke-width="2.3" stroke-linejoin="round"/></svg>
<div class="a" style="left:50px;top:1845px;width:1333px;height:43px;background:#fff"></div>
<div class="a" style="left:50px;top:1845px;width:1333px;height:2px;background:#ececec"></div>
<div class="t" style="left:184px;top:1856.9px;font-size:25px;font-weight:400;color:#111;">Concrete</div>
<div class="t" style="left:613px;top:1856.9px;font-size:25px;font-weight:400;color:#111;">&lt;Undefined&gt;</div>
<svg class="a" style="left:120px;top:1857px;" width="32" height="17" viewBox="0 0 32 17"><path d="M7,10.2 H2.5 V2.2 H21.5 V10.2 H14.4 M18,6.1 H10.7 V14.2 H29.5 V6.1 H25.4" fill="none" stroke="#27323c" stroke-width="2.3" stroke-linejoin="round"/></svg>
<div class="a" style="left:50px;top:1888px;width:1333px;height:43px;background:#fff"></div>
<div class="a" style="left:50px;top:1888px;width:1333px;height:2px;background:#ececec"></div>
<div class="t" style="left:184px;top:1899.9px;font-size:25px;font-weight:400;color:#111;">Stucco</div>
<div class="t" style="left:613px;top:1899.9px;font-size:25px;font-weight:400;color:#111;">No</div>
<svg class="a" style="left:118px;top:1897px;" width="36" height="24" viewBox="0 0 36 24"><path d="M13.7,8.8 H2.3 V1 H20.9 V8.3 M23.3,13.6 H33.8 V21.6 H15.2 V14.7" fill="none" stroke="#27323c" stroke-width="2.2" stroke-linejoin="round"/></svg>
<div class="a" style="left:50px;top:1931px;width:1333px;height:43px;background:#fff"></div>
<div class="a" style="left:50px;top:1931px;width:1333px;height:2px;background:#ececec"></div>
<div class="t" style="left:184px;top:1942.9px;font-size:25px;font-weight:400;color:#111;">Painting</div>
<div class="t" style="left:613px;top:1942.9px;font-size:25px;font-weight:400;color:#111;">Without coating</div>
<svg class="a" style="left:118px;top:1940px;" width="36" height="24" viewBox="0 0 36 24"><path d="M13.7,8.8 H2.3 V1 H20.9 V8.3 M23.3,13.6 H33.8 V21.6 H15.2 V14.7" fill="none" stroke="#27323c" stroke-width="2.2" stroke-linejoin="round"/></svg>
<div class="a" style="left:50px;top:1974px;width:1333px;height:27px;background:#f0f0f0"></div>
<svg class="a" style="left:64.0px;top:1991px;" width="16" height="9" viewBox="0 0 16 9"><polygon points="0,0 16,0 8.0,9" fill="#3a3a3a"/></svg>
<div class="t" style="left:179px;top:1986.9px;font-size:23px;font-weight:700;color:#111;">COATINGS / REVESTIMIENTOS</div>
<div class="a" style="left:50px;top:2001px;width:1369px;height:26px;background:#f0f0f0"></div>
<svg class="a" style="left:1300px;top:820px;" width="36" height="35" viewBox="0 0 36 35"><path d="M2,2 H34 V33 H2 Z M2,10 H34 M2,18 H34 M2,26 H34 M12,2 V10 M24,2 V10 M8,10 V18 M20,10 V18 M30,10 V18 M12,18 V26 M24,18 V26 M8,26 V33 M20,26 V33 M30,26 V33" fill="none" stroke="#27323c" stroke-width="2.2"/></svg>
<svg class="a" style="left:1392px;top:613px;" width="17" height="12" viewBox="0 0 17 12"><polyline points="1.5,10.5 8.5,2.5 15.5,10.5" fill="none" stroke="#555" stroke-width="3"/></svg>
<div class="a" style="left:1384px;top:635px;width:33px;height:618px;background:#cdcdcd"></div>
<svg class="a" style="left:1392px;top:1978px;" width="17" height="12" viewBox="0 0 17 12"><polyline points="1.5,1.5 8.5,9.5 15.5,1.5" fill="none" stroke="#555" stroke-width="3"/></svg>
<div class="a" style="left:173px;top:1154px;width:1211px;height:52px;border:5px solid #2d4d8c;border-right:none"></div>
<div class="a" style="left:50px;top:2026px;width:1367px;height:2px;background:#a8a8a8"></div>
<svg class="a" style="left:54px;top:2060px;" width="54" height="33" viewBox="0 0 54 33"><path d="M10,3 H52 L44,13 H2 Z" fill="none" stroke="#27323c" stroke-width="2.2"/><path d="M2,13 V20 L8,22 H44 L52,13 M2,20 V27 L8,29 H44 L52,20" fill="none" stroke="#27323c" stroke-width="2.2"/><path d="M14,6 H22 L20,10 H12 Z M27,10 L30,6 M32,10 L35,6" fill="none" stroke="#27323c" stroke-width="1.8"/></svg>
<div class="a" style="left:128px;top:2056px;width:847px;height:44px;background:#e1e1e1;border:2px solid #adadad"></div>
<svg class="a" style="left:138px;top:2067px;" width="36" height="22" viewBox="0 0 36 22"><path d="M2,11 C10,2 26,2 34,11 C26,20 10,20 2,11 Z" fill="none" stroke="#27323c" stroke-width="2.2"/><circle cx="18" cy="11" r="5" fill="#27323c"/></svg>
<div class="t" style="left:184px;top:2065.4px;font-size:25px;font-weight:400;color:#111;">Mesh - Scan R150</div>
<svg class="a" style="left:957px;top:2070.5px;" width="9" height="15" viewBox="0 0 9 15"><polygon points="0,0 9,7.5 0,15" fill="#333"/></svg>
<div class="a" style="left:1012px;top:2056px;width:189px;height:44px;background:#e1e1e1;border:2px solid #adadad"></div>
<div class="t" style="left:1012.0px;width:189px;text-align:center;top:2065.4px;font-size:25px;font-weight:400;color:#111;">Cancel</div>
<div class="a" style="left:1227px;top:2056px;width:190px;height:44px;background:#e1e1e1;border:4px solid #0078d7"></div>
<div class="t" style="left:1227.0px;width:190px;text-align:center;top:2065.4px;font-size:25px;font-weight:400;color:#111;">OK</div>
<svg class="a" style="left:1424px;top:2102px;" width="18" height="18" viewBox="0 0 18 18"><g fill="#c0c0c0"><rect x="13" y="1" width="3" height="3"/><rect x="9" y="6" width="3" height="3"/><rect x="13" y="6" width="3" height="3"/><rect x="5" y="11" width="3" height="3"/><rect x="9" y="11" width="3" height="3"/><rect x="13" y="11" width="3" height="3"/></g></svg>
<svg class="a" style="left:2698px;top:234px;" width="42" height="32" viewBox="0 0 42 32"><path d="M2,30 V14 L14,2 L30,9 L40,16 V30 Z M21,30 V14 L14,2 M21,14 H40" fill="none" stroke="#27323c" stroke-width="2.4"/></svg>
<div class="a" style="left:2762px;top:228px;width:2px;height:40px;background:#8d8d8d"></div>
<div class="a" style="left:2777px;top:217px;width:65px;height:62px;background:#c3dcf3;border:2px solid #99cbf6"></div>
<svg class="a" style="left:2789px;top:234px;" width="42" height="32" viewBox="0 0 42 32"><rect x="1.5" y="1.5" width="38" height="29" fill="none" stroke="#27323c" stroke-width="2.4"/><path d="M6,25 V15 L14,6 L24,11 L34,17 V25 Z M22,25 V15 L14,6 M22,15 H34" fill="none" stroke="#27323c" stroke-width="2.2"/></svg>
<svg class="a" style="left:2854px;top:229px;" width="42" height="38" viewBox="0 0 42 38"><path d="M2,8 L12,2 V36 L2,36 Z" fill="none" stroke="#27323c" stroke-width="2.2"/><path d="M12,10 H39 V36 H2" fill="none" stroke="#27323c" stroke-width="2.4"/><path d="M24,26 H39 M24,31 H39 M24,26 V36" stroke="#27323c" stroke-width="2.2"/></svg>
<svg class="a" style="left:2920px;top:231px;" width="40" height="40" viewBox="0 0 40 40"><rect x="3" y="2" width="22" height="27" rx="2" fill="none" stroke="#27323c" stroke-width="2.4"/><path d="M7,29 V33 H30 V8 H25 M11,33 V37 H35 V13 H30" fill="none" stroke="#27323c" stroke-width="2.4"/><rect x="1" y="8" width="18" height="5" fill="none" stroke="#27323c" stroke-width="2.2"/></svg>
<div class="a" style="left:2958px;top:206px;width:153px;height:2px;background:#939393"></div>
<div class="a" style="left:3309px;top:227px;width:71px;height:44px;background:#e6e6e6;border:2px solid #adadad"></div>
<svg class="a" style="left:3322px;top:238px;" width="50" height="22" viewBox="0 0 50 22"><path d="M1,3 H26 M1,11 H26 M1,19 H26" stroke="#27323c" stroke-width="2.4"/><polygon points="38,4 46,11 38,18" fill="#27323c"/></svg>
<div class="a" style="left:2687px;top:293px;width:695px;height:48px;background:#fff;border:2px solid #7a7a7a"></div>
<div class="t" style="left:2696px;top:305.9px;font-size:24px;font-weight:400;color:#6b6b6b;">Search View Map</div>
<div class="a" style="left:2683px;top:341px;width:699px;height:1396px;background:#fff"></div>
<div class="a" style="left:3382px;top:341px;width:5px;height:1396px;background:#e9e9e9"></div>
<div class="a" style="left:2683px;top:725px;width:699px;height:47px;background:#cce4f7"></div>
<svg class="a" style="left:2697px;top:363.0px;" width="20" height="14" viewBox="0 0 20 14"><polyline points="2,3 10,11 18,3" fill="none" stroke="#333" stroke-width="3"/></svg>
<svg class="a" style="left:2728px;top:355.0px;" width="40" height="31" viewBox="0 0 40 31"><rect x="1.5" y="1.5" width="36" height="28" rx="2" fill="#fff" stroke="#2f7de1" stroke-width="2.4"/><path d="M5,25 V15 L13,6 L23,11 L32,17 V25 Z M21,25 V15 L13,6 M21,15 H32" fill="none" stroke="#2f7de1" stroke-width="2.2"/></svg>
<div class="t" style="left:2777px;top:358.3px;font-size:23.2px;font-weight:400;color:#111;">DUOMO DI MOLFETTA</div>
<svg class="a" style="left:2749px;top:401.4px;" width="40" height="32" viewBox="0 0 40 32"><path d="M1.5,30 V1.5 H13 V11 H38 V30 Z" fill="#fff" stroke="#2f7de1" stroke-width="2.4"/><path d="M5,9 V4 H10 V7" fill="none" stroke="#2f7de1" stroke-width="1.8"/></svg>
<div class="t" style="left:2800px;top:405.1px;font-size:24.3px;font-weight:400;color:#111;">Site</div>
<svg class="a" style="left:2723px;top:456.8px;" width="14" height="18" viewBox="0 0 14 18"><polyline points="2,2 11,9 2,16" fill="none" stroke="#8a8a8a" stroke-width="2.8"/></svg>
<svg class="a" style="left:2749px;top:448.8px;" width="40" height="32" viewBox="0 0 40 32"><path d="M1.5,30 V1.5 H13 V11 H38 V30 Z" fill="#dcebfb" stroke="#2f7de1" stroke-width="2.4"/><path d="M5,9 V4 H10 V7" fill="none" stroke="#2f7de1" stroke-width="1.8"/></svg>
<svg class="a" style="left:2749px;top:465.8px;" width="16" height="16" viewBox="0 0 16 16"><path d="M3,15 C3,8 6,5 12,5" fill="none" stroke="#1e2a33" stroke-width="3.2"/><polygon points="9,0 15,5 9,10" fill="#1e2a33"/></svg>
<div class="t" style="left:2800px;top:452.5px;font-size:24.3px;font-weight:400;color:#111;">Floor Plans Modelling</div>
<svg class="a" style="left:2723px;top:504.20000000000005px;" width="14" height="18" viewBox="0 0 14 18"><polyline points="2,2 11,9 2,16" fill="none" stroke="#8a8a8a" stroke-width="2.8"/></svg>
<svg class="a" style="left:2749px;top:495.20000000000005px;" width="40" height="32" viewBox="0 0 40 32"><path d="M1.9,7 V2.5 Q1.9,1.4 3,1.4 H12.3 L17.6,7" fill="#ebebeb" stroke="#27323c" stroke-width="2.2" stroke-linejoin="round"/><rect x="1.9" y="7" width="35.5" height="23" rx="1.2" fill="#ebebeb" stroke="#27323c" stroke-width="2.5"/></svg>
<div class="t" style="left:2800px;top:499.9px;font-size:24.3px;font-weight:400;color:#111;">Plans Model</div>
<svg class="a" style="left:2723px;top:551.6px;" width="14" height="18" viewBox="0 0 14 18"><polyline points="2,2 11,9 2,16" fill="none" stroke="#8a8a8a" stroke-width="2.8"/></svg>
<svg class="a" style="left:2749px;top:542.6px;" width="40" height="32" viewBox="0 0 40 32"><path d="M1.9,7 V2.5 Q1.9,1.4 3,1.4 H12.3 L17.6,7" fill="#ebebeb" stroke="#27323c" stroke-width="2.2" stroke-linejoin="round"/><rect x="1.9" y="7" width="35.5" height="23" rx="1.2" fill="#ebebeb" stroke="#27323c" stroke-width="2.5"/></svg>
<div class="t" style="left:2800px;top:547.3px;font-size:24.3px;font-weight:400;color:#111;">P.Cloud Plans - Complet</div>
<svg class="a" style="left:2723px;top:599.0px;" width="14" height="18" viewBox="0 0 14 18"><polyline points="2,2 11,9 2,16" fill="none" stroke="#8a8a8a" stroke-width="2.8"/></svg>
<svg class="a" style="left:2749px;top:590.0px;" width="40" height="32" viewBox="0 0 40 32"><path d="M1.9,7 V2.5 Q1.9,1.4 3,1.4 H12.3 L17.6,7" fill="#ebebeb" stroke="#27323c" stroke-width="2.2" stroke-linejoin="round"/><rect x="1.9" y="7" width="35.5" height="23" rx="1.2" fill="#ebebeb" stroke="#27323c" stroke-width="2.5"/></svg>
<div class="t" style="left:2800px;top:594.7px;font-size:24.3px;font-weight:400;color:#111;">P.Cloud Plans - Segment</div>
<svg class="a" style="left:2723px;top:646.4px;" width="14" height="18" viewBox="0 0 14 18"><polyline points="2,2 11,9 2,16" fill="none" stroke="#8a8a8a" stroke-width="2.8"/></svg>
<svg class="a" style="left:2749px;top:637.4px;" width="40" height="32" viewBox="0 0 40 32"><path d="M1.9,7 V2.5 Q1.9,1.4 3,1.4 H12.3 L17.6,7" fill="#ebebeb" stroke="#27323c" stroke-width="2.2" stroke-linejoin="round"/><rect x="1.9" y="7" width="35.5" height="23" rx="1.2" fill="#ebebeb" stroke="#27323c" stroke-width="2.5"/></svg>
<div class="t" style="left:2800px;top:642.1px;font-size:24.3px;font-weight:400;color:#111;">P.Cloud Sections - Segment</div>
<svg class="a" style="left:2723px;top:693.8px;" width="14" height="18" viewBox="0 0 14 18"><polyline points="2,2 11,9 2,16" fill="none" stroke="#8a8a8a" stroke-width="2.8"/></svg>
<svg class="a" style="left:2749px;top:685.8px;" width="40" height="32" viewBox="0 0 40 32"><path d="M1.5,30 V1.5 H13 V11 H38 V30 Z" fill="#dcebfb" stroke="#2f7de1" stroke-width="2.4"/><path d="M5,9 V4 H10 V7" fill="none" stroke="#2f7de1" stroke-width="1.8"/></svg>
<svg class="a" style="left:2749px;top:702.8px;" width="16" height="16" viewBox="0 0 16 16"><path d="M3,15 C3,8 6,5 12,5" fill="none" stroke="#1e2a33" stroke-width="3.2"/><polygon points="9,0 15,5 9,10" fill="#1e2a33"/></svg>
<div class="t" style="left:2800px;top:689.5px;font-size:24.3px;font-weight:400;color:#111;">Ceiling Plans</div>
<svg class="a" style="left:2723px;top:741.2px;" width="14" height="18" viewBox="0 0 14 18"><polyline points="2,2 11,9 2,16" fill="none" stroke="#8a8a8a" stroke-width="2.8"/></svg>
<svg class="a" style="left:2749px;top:733.2px;" width="40" height="32" viewBox="0 0 40 32"><path d="M1.5,30 V1.5 H13 V11 H38 V30 Z" fill="#dcebfb" stroke="#2f7de1" stroke-width="2.4"/><path d="M5,9 V4 H10 V7" fill="none" stroke="#2f7de1" stroke-width="1.8"/></svg>
<svg class="a" style="left:2749px;top:750.2px;" width="16" height="16" viewBox="0 0 16 16"><path d="M3,15 C3,8 6,5 12,5" fill="none" stroke="#1e2a33" stroke-width="3.2"/><polygon points="9,0 15,5 9,10" fill="#1e2a33"/></svg>
<div class="t" style="left:2800px;top:736.9px;font-size:24.3px;font-weight:400;color:#111;">Structural Plans</div>
<svg class="a" style="left:2723px;top:788.5999999999999px;" width="14" height="18" viewBox="0 0 14 18"><polyline points="2,2 11,9 2,16" fill="none" stroke="#8a8a8a" stroke-width="2.8"/></svg>
<svg class="a" style="left:2749px;top:780.5999999999999px;" width="40" height="32" viewBox="0 0 40 32"><path d="M1.5,10 L19,1.5 L38,10 Z" fill="none" stroke="#2f7de1" stroke-width="2.2"/><path d="M5,10 V27 H36 V10" fill="#dcebfb" stroke="#2f7de1" stroke-width="2.4"/></svg>
<svg class="a" style="left:2749px;top:797.5999999999999px;" width="16" height="16" viewBox="0 0 16 16"><path d="M3,15 C3,8 6,5 12,5" fill="none" stroke="#1e2a33" stroke-width="3.2"/><polygon points="9,0 15,5 9,10" fill="#1e2a33"/></svg>
<div class="t" style="left:2800px;top:784.3px;font-size:24.3px;font-weight:400;color:#111;">Sections</div>
<svg class="a" style="left:2723px;top:836.0px;" width="14" height="18" viewBox="0 0 14 18"><polyline points="2,2 11,9 2,16" fill="none" stroke="#8a8a8a" stroke-width="2.8"/></svg>
<svg class="a" style="left:2749px;top:828.0px;" width="40" height="32" viewBox="0 0 40 32"><path d="M1.5,10 L19,1.5 L38,10 Z" fill="none" stroke="#2f7de1" stroke-width="2.2"/><path d="M5,10 V27 H36 V10" fill="#dcebfb" stroke="#2f7de1" stroke-width="2.4"/></svg>
<svg class="a" style="left:2749px;top:845.0px;" width="16" height="16" viewBox="0 0 16 16"><path d="M3,15 C3,8 6,5 12,5" fill="none" stroke="#1e2a33" stroke-width="3.2"/><polygon points="9,0 15,5 9,10" fill="#1e2a33"/></svg>
<div class="t" style="left:2800px;top:831.7px;font-size:24.3px;font-weight:400;color:#111;">Elevations</div>
<svg class="a" style="left:2723px;top:883.4px;" width="14" height="18" viewBox="0 0 14 18"><polyline points="2,2 11,9 2,16" fill="none" stroke="#8a8a8a" stroke-width="2.8"/></svg>
<svg class="a" style="left:2749px;top:874.4px;" width="40" height="32" viewBox="0 0 40 32"><path d="M1.9,7 V2.5 Q1.9,1.4 3,1.4 H12.3 L17.6,7" fill="#ebebeb" stroke="#27323c" stroke-width="2.2" stroke-linejoin="round"/><rect x="1.9" y="7" width="35.5" height="23" rx="1.2" fill="#ebebeb" stroke="#27323c" stroke-width="2.5"/></svg>
<div class="t" style="left:2800px;top:879.1px;font-size:24.3px;font-weight:400;color:#111;">Mesh Plans</div>
<svg class="a" style="left:2749px;top:922.8px;" width="40" height="32" viewBox="0 0 40 32"><rect x="1.5" y="1.5" width="37" height="29" rx="2" fill="#fff" stroke="#2f7de1" stroke-width="2.4"/><path d="M10,30 V8 H20 V24" fill="none" stroke="#2f7de1" stroke-width="2.2"/><rect x="25" y="8" width="8" height="8" fill="none" stroke="#2f7de1" stroke-width="2"/></svg>
<svg class="a" style="left:2749px;top:939.8px;" width="16" height="16" viewBox="0 0 16 16"><path d="M3,15 C3,8 6,5 12,5" fill="none" stroke="#1e2a33" stroke-width="3.2"/><polygon points="9,0 15,5 9,10" fill="#1e2a33"/></svg>
<div class="t" style="left:2800px;top:926.5px;font-size:24.3px;font-weight:400;color:#111;">Interior Elevations</div>
<svg class="a" style="left:2723px;top:978.1999999999999px;" width="14" height="18" viewBox="0 0 14 18"><polyline points="2,2 11,9 2,16" fill="none" stroke="#8a8a8a" stroke-width="2.8"/></svg>
<svg class="a" style="left:2749px;top:970.1999999999999px;" width="40" height="32" viewBox="0 0 40 32"><path d="M1.5,30 V3 H27 L38,10 V30 Z" fill="#dcebfb" stroke="#2f7de1" stroke-width="2.4"/><path d="M14,22 L24,10 M10,26 H36" stroke="#2f7de1" stroke-width="2.2"/></svg>
<svg class="a" style="left:2749px;top:987.1999999999999px;" width="16" height="16" viewBox="0 0 16 16"><path d="M3,15 C3,8 6,5 12,5" fill="none" stroke="#1e2a33" stroke-width="3.2"/><polygon points="9,0 15,5 9,10" fill="#1e2a33"/></svg>
<div class="t" style="left:2800px;top:973.9px;font-size:24.3px;font-weight:400;color:#111;">Worksheets</div>
<svg class="a" style="left:2723px;top:1025.6px;" width="14" height="18" viewBox="0 0 14 18"><polyline points="2,2 11,9 2,16" fill="none" stroke="#8a8a8a" stroke-width="2.8"/></svg>
<svg class="a" style="left:2749px;top:1016.5999999999999px;" width="40" height="32" viewBox="0 0 40 32"><path d="M1.9,7 V2.5 Q1.9,1.4 3,1.4 H12.3 L17.6,7" fill="#ebebeb" stroke="#27323c" stroke-width="2.2" stroke-linejoin="round"/><rect x="1.9" y="7" width="35.5" height="23" rx="1.2" fill="#ebebeb" stroke="#27323c" stroke-width="2.5"/></svg>
<div class="t" style="left:2800px;top:1021.3px;font-size:24.3px;font-weight:400;color:#111;">Control</div>
<svg class="a" style="left:2719px;top:1076.0px;" width="20" height="14" viewBox="0 0 20 14"><polyline points="2,3 10,11 18,3" fill="none" stroke="#333" stroke-width="3"/></svg>
<svg class="a" style="left:2749px;top:1064.0px;" width="40" height="32" viewBox="0 0 40 32"><path d="M1.9,7 V2.5 Q1.9,1.4 3,1.4 H12.3 L17.6,7" fill="#ebebeb" stroke="#27323c" stroke-width="2.2" stroke-linejoin="round"/><rect x="1.9" y="7" width="35.5" height="23" rx="1.2" fill="#ebebeb" stroke="#27323c" stroke-width="2.5"/></svg>
<div class="t" style="left:2800px;top:1068.7px;font-size:24.3px;font-weight:400;color:#111;">Data Schemas</div>
<svg class="a" style="left:2777px;top:1110.4px;" width="28" height="36" viewBox="0 0 28 36"><rect x="1.5" y="1.5" width="25" height="33" rx="2" fill="#fff" stroke="#2f7de1" stroke-width="2.4"/><path d="M2,10.5 H26" stroke="#2f7de1" stroke-width="2"/><path d="M2,19.0 H26" stroke="#2f7de1" stroke-width="2"/><path d="M2,27.5 H26" stroke="#2f7de1" stroke-width="2"/><path d="M10,2 V34" stroke="#2f7de1" stroke-width="2"/><path d="M18,2 V34" stroke="#2f7de1" stroke-width="2"/></svg>
<div class="t" style="left:2820px;top:1116.1px;font-size:24.3px;font-weight:400;color:#111;">IES-05 PointsCloud Inventory</div>
<svg class="a" style="left:2777px;top:1157.8px;" width="28" height="36" viewBox="0 0 28 36"><rect x="1.5" y="1.5" width="25" height="33" rx="2" fill="#fff" stroke="#2f7de1" stroke-width="2.4"/><path d="M2,10.5 H26" stroke="#2f7de1" stroke-width="2"/><path d="M2,19.0 H26" stroke="#2f7de1" stroke-width="2"/><path d="M2,27.5 H26" stroke="#2f7de1" stroke-width="2"/><path d="M10,2 V34" stroke="#2f7de1" stroke-width="2"/><path d="M18,2 V34" stroke="#2f7de1" stroke-width="2"/></svg>
<div class="t" style="left:2820px;top:1163.5px;font-size:24.3px;font-weight:400;color:#111;">IES-05.1 PointsCloud Segment Int. Inventory</div>
<svg class="a" style="left:2777px;top:1205.1999999999998px;" width="28" height="36" viewBox="0 0 28 36"><rect x="1.5" y="1.5" width="25" height="33" rx="2" fill="#fff" stroke="#2f7de1" stroke-width="2.4"/><path d="M2,10.5 H26" stroke="#2f7de1" stroke-width="2"/><path d="M2,19.0 H26" stroke="#2f7de1" stroke-width="2"/><path d="M2,27.5 H26" stroke="#2f7de1" stroke-width="2"/><path d="M10,2 V34" stroke="#2f7de1" stroke-width="2"/><path d="M18,2 V34" stroke="#2f7de1" stroke-width="2"/></svg>
<div class="t" style="left:2820px;top:1210.9px;font-size:24.3px;font-weight:400;color:#111;">IES-05.2 PointsCloud Segment Ext. Inventory</div>
<svg class="a" style="left:2777px;top:1252.6px;" width="28" height="36" viewBox="0 0 28 36"><rect x="1.5" y="1.5" width="25" height="33" rx="2" fill="#fff" stroke="#2f7de1" stroke-width="2.4"/><path d="M2,10.5 H26" stroke="#2f7de1" stroke-width="2"/><path d="M2,19.0 H26" stroke="#2f7de1" stroke-width="2"/><path d="M2,27.5 H26" stroke="#2f7de1" stroke-width="2"/><path d="M10,2 V34" stroke="#2f7de1" stroke-width="2"/><path d="M18,2 V34" stroke="#2f7de1" stroke-width="2"/></svg>
<div class="t" style="left:2820px;top:1258.3px;font-size:24.3px;font-weight:400;color:#111;">04-SCP Decays Column</div>
<svg class="a" style="left:2777px;top:1300.0px;" width="28" height="36" viewBox="0 0 28 36"><rect x="1.5" y="1.5" width="25" height="33" rx="2" fill="#fff" stroke="#2f7de1" stroke-width="2.4"/><path d="M2,10.5 H26" stroke="#2f7de1" stroke-width="2"/><path d="M2,19.0 H26" stroke="#2f7de1" stroke-width="2"/><path d="M2,27.5 H26" stroke="#2f7de1" stroke-width="2"/><path d="M10,2 V34" stroke="#2f7de1" stroke-width="2"/><path d="M18,2 V34" stroke="#2f7de1" stroke-width="2"/></svg>
<div class="t" style="left:2820px;top:1305.7px;font-size:24.3px;font-weight:400;color:#111;">05-SCP Risk Assessment Manager Column</div>
<svg class="a" style="left:2777px;top:1347.4px;" width="28" height="36" viewBox="0 0 28 36"><rect x="1.5" y="1.5" width="25" height="33" rx="2" fill="#fff" stroke="#2f7de1" stroke-width="2.4"/><path d="M2,10.5 H26" stroke="#2f7de1" stroke-width="2"/><path d="M2,19.0 H26" stroke="#2f7de1" stroke-width="2"/><path d="M2,27.5 H26" stroke="#2f7de1" stroke-width="2"/><path d="M10,2 V34" stroke="#2f7de1" stroke-width="2"/><path d="M18,2 V34" stroke="#2f7de1" stroke-width="2"/></svg>
<div class="t" style="left:2820px;top:1353.1px;font-size:24.3px;font-weight:400;color:#111;">03-SCP Element Column, Materials and Tecnique</div>
<svg class="a" style="left:2749px;top:1394.8px;" width="40" height="38" viewBox="0 0 40 38"><circle cx="20" cy="19" r="17" fill="#dcebfb" stroke="#2f7de1" stroke-width="2.4"/><path d="M20,2 V36 M3,19 H37 M20,14 H35 M12,2 V19" fill="none" stroke="#2f7de1" stroke-width="2"/></svg>
<svg class="a" style="left:2749px;top:1415.8px;" width="16" height="16" viewBox="0 0 16 16"><path d="M3,15 C3,8 6,5 12,5" fill="none" stroke="#1e2a33" stroke-width="3.2"/><polygon points="9,0 15,5 9,10" fill="#1e2a33"/></svg>
<div class="t" style="left:2800px;top:1400.5px;font-size:24.3px;font-weight:400;color:#111;">Details</div>
<svg class="a" style="left:2749px;top:1443.2px;" width="40" height="34" viewBox="0 0 40 34"><path d="M1.5,32 V2 H27 L38,10 V32 Z" fill="#dcebfb" stroke="#2f7de1" stroke-width="2.4"/><path d="M10,26 V12 H26 V26 Z M14,12 V8 H30 V22 H26" fill="none" stroke="#2f7de1" stroke-width="2"/></svg>
<svg class="a" style="left:2749px;top:1462.2px;" width="16" height="16" viewBox="0 0 16 16"><path d="M3,15 C3,8 6,5 12,5" fill="none" stroke="#1e2a33" stroke-width="3.2"/><polygon points="9,0 15,5 9,10" fill="#1e2a33"/></svg>
<div class="t" style="left:2800px;top:1447.9px;font-size:24.3px;font-weight:400;color:#111;">3D Documents</div>
<svg class="a" style="left:2723px;top:1499.6px;" width="14" height="18" viewBox="0 0 14 18"><polyline points="2,2 11,9 2,16" fill="none" stroke="#8a8a8a" stroke-width="2.8"/></svg>
<svg class="a" style="left:2749px;top:1490.6px;" width="40" height="32" viewBox="0 0 40 32"><path d="M1.9,7 V2.5 Q1.9,1.4 3,1.4 H12.3 L17.6,7" fill="#ebebeb" stroke="#27323c" stroke-width="2.2" stroke-linejoin="round"/><rect x="1.9" y="7" width="35.5" height="23" rx="1.2" fill="#ebebeb" stroke="#27323c" stroke-width="2.5"/></svg>
<div class="t" style="left:2800px;top:1495.3px;font-size:24.3px;font-weight:400;color:#111;">3D - Columns</div>
<svg class="a" style="left:2723px;top:1547.0px;" width="14" height="18" viewBox="0 0 14 18"><polyline points="2,2 11,9 2,16" fill="none" stroke="#8a8a8a" stroke-width="2.8"/></svg>
<svg class="a" style="left:2749px;top:1538.0px;" width="40" height="32" viewBox="0 0 40 32"><path d="M1.9,7 V2.5 Q1.9,1.4 3,1.4 H12.3 L17.6,7" fill="#ebebeb" stroke="#27323c" stroke-width="2.2" stroke-linejoin="round"/><rect x="1.9" y="7" width="35.5" height="23" rx="1.2" fill="#ebebeb" stroke="#27323c" stroke-width="2.5"/></svg>
<div class="t" style="left:2800px;top:1542.7px;font-size:24.3px;font-weight:400;color:#111;">3D PCloud</div>
<svg class="a" style="left:2719px;top:1597.3999999999999px;" width="20" height="14" viewBox="0 0 20 14"><polyline points="2,3 10,11 18,3" fill="none" stroke="#333" stroke-width="3"/></svg>
<svg class="a" style="left:2749px;top:1585.3999999999999px;" width="40" height="32" viewBox="0 0 40 32"><path d="M1.9,7 V2.5 Q1.9,1.4 3,1.4 H12.3 L17.6,7" fill="#ebebeb" stroke="#27323c" stroke-width="2.2" stroke-linejoin="round"/><rect x="1.9" y="7" width="35.5" height="23" rx="1.2" fill="#ebebeb" stroke="#27323c" stroke-width="2.5"/></svg>
<div class="t" style="left:2800px;top:1590.1px;font-size:24.3px;font-weight:400;color:#111;">Indexes</div>
<svg class="a" style="left:2771px;top:1633.8px;" width="40" height="31" viewBox="0 0 40 31"><rect x="1.5" y="1.5" width="36" height="27" rx="2" fill="#fff" stroke="#2f7de1" stroke-width="2.4"/><path d="M22,28 V20 H37 M22,24 H37" fill="none" stroke="#2f7de1" stroke-width="2.2"/></svg>
<div class="t" style="left:2820px;top:1637.5px;font-size:24.3px;font-weight:400;color:#111;">Sheet Index</div>
<svg class="a" style="left:2723px;top:1689.2px;" width="14" height="18" viewBox="0 0 14 18"><polyline points="2,2 11,9 2,16" fill="none" stroke="#8a8a8a" stroke-width="2.8"/></svg>
<svg class="a" style="left:2749px;top:1680.2px;" width="40" height="32" viewBox="0 0 40 32"><path d="M1.9,7 V2.5 Q1.9,1.4 3,1.4 H12.3 L17.6,7" fill="#ebebeb" stroke="#27323c" stroke-width="2.2" stroke-linejoin="round"/><rect x="1.9" y="7" width="35.5" height="23" rx="1.2" fill="#ebebeb" stroke="#27323c" stroke-width="2.5"/></svg>
<div class="t" style="left:2800px;top:1684.9px;font-size:24.3px;font-weight:400;color:#111;">Views of Gabri</div>
<svg class="a" style="left:2697px;top:1750px;" width="46" height="42" viewBox="0 0 46 42"><path d="M2,40 V18 H22 M30,18 V40 Z" fill="none" stroke="#27323c" stroke-width="2.4"/><path d="M2,40 H30 V30" fill="none" stroke="#27323c" stroke-width="2.4"/><path d="M8,38 V28 L15,22 L24,26 L28,30 V38 Z M19,38 V28" fill="none" stroke="#27323c" stroke-width="2.2"/><circle cx="34" cy="12" r="10" fill="#f0f0f0" stroke="#2f7de1" stroke-width="2.2"/><path d="M34,6 V18 M28,12 H40" stroke="#2f7de1" stroke-width="2.2"/></svg>
<svg class="a" style="left:2760px;top:1750px;" width="46" height="44" viewBox="0 0 46 44"><path d="M2,40 V18 H22 M2,40 H30 V30" fill="none" stroke="#27323c" stroke-width="2.4"/><path d="M8,38 V28 L15,22 L24,26 L28,30 V38 Z" fill="none" stroke="#27323c" stroke-width="2.2"/><circle cx="36" cy="12" r="10" fill="#f0f0f0" stroke="#2f7de1" stroke-width="2.2"/><path d="M36,6 V18 M30,12 H42" stroke="#2f7de1" stroke-width="2.2"/><path d="M3,43 C3,37 6,34 11,34" fill="none" stroke="#1e2a33" stroke-width="3"/><polygon points="9,29 15,34 9,39" fill="#1e2a33"/></svg>
<svg class="a" style="left:2828px;top:1750px;" width="46" height="42" viewBox="0 0 46 42"><path d="M2,40 V16 L5,13 H14 L17,17 H20 M2,40 H34 V28" fill="none" stroke="#27323c" stroke-width="2.4"/><circle cx="34" cy="12" r="10" fill="#f0f0f0" stroke="#2f7de1" stroke-width="2.2"/><path d="M34,6 V18 M28,12 H40" stroke="#2f7de1" stroke-width="2.2"/></svg>
<svg class="a" style="left:2897px;top:1760px;" width="32" height="26" viewBox="0 0 32 26"><rect x="1.5" y="1.5" width="29" height="22" rx="2" fill="none" stroke="#2f7de1" stroke-width="2.4"/><path d="M1.5,7 H30" stroke="#2f7de1" stroke-width="2.4"/><path d="M7,13 H9 M13,13 H25 M7,18 H9 M13,18 H25" stroke="#2f7de1" stroke-width="2.2"/></svg>
<svg class="a" style="left:2962px;top:1756px;" width="31" height="34" viewBox="0 0 31 34"><path d="M3,3 L28,31 M28,3 L3,31" stroke="#f0431e" stroke-width="4.5"/></svg>
<div class="a" style="left:2687px;top:1810px;width:695px;height:47px;background:#d6d6d6;border-radius:7px"></div>
<svg class="a" style="left:2702px;top:1830px;" width="16" height="9" viewBox="0 0 16 9"><polygon points="0,0 16,0 8,9" fill="#333"/></svg>
<div class="t" style="left:2739px;top:1821.7px;font-size:24.3px;font-weight:400;color:#111;">Properties</div>
<svg class="a" style="left:2693px;top:1871px;" width="30" height="24" viewBox="0 0 30 24"><path d="M1.5,22.5 V1.5 H10 V9 H28 V22.5 Z" fill="#fff" stroke="#2f7de1" stroke-width="2.4"/></svg>
<div class="a" style="left:2730px;top:1863px;width:133px;height:39px;background:#fff;border:2px solid #7a7a7a"></div>
<div class="a" style="left:2870px;top:1863px;width:512px;height:39px;background:#fff;border:2px solid #7a7a7a"></div>
<div class="t" style="left:2880px;top:1870.7px;font-size:24.3px;font-weight:400;color:#111;">Structural Plans</div>
<svg class="a" style="left:2690px;top:1913px;" width="35" height="28" viewBox="0 0 35 28"><path d="M8,2 H33 L27,10 H2 Z M2,10 V14 L6,17 H27 L33,10 M2,17 V21 L6,24 H27 L33,17" fill="none" stroke="#27323c" stroke-width="2.2"/><path d="M10,6 H20 M22,6 L25,3" stroke="#27323c" stroke-width="1.5"/></svg>
<div class="t" style="left:2730px;top:1916.7px;font-size:24.3px;font-weight:400;color:#111;">07 Plans - Structural</div>
<svg class="a" style="left:2691px;top:1965px;" width="34" height="17" viewBox="0 0 34 17"><path d="M1.5,1.5 H32 V15 H1.5 Z M8,15 V9 M14,15 V11 M20,15 V9 M26,15 V11" fill="none" stroke="#27323c" stroke-width="2.2"/></svg>
<div class="t" style="left:2730px;top:1961.7px;font-size:24.3px;font-weight:400;color:#111;">1:100</div>
<svg class="a" style="left:2691px;top:2006px;" width="34" height="25" viewBox="0 0 34 25"><rect x="1.5" y="1.5" width="31" height="22" fill="none" stroke="#27323c" stroke-width="2.4"/><rect x="8" y="8" width="18" height="9" fill="none" stroke="#27323c" stroke-width="2.2"/></svg>
<div class="t" style="left:2730px;top:2006.7px;font-size:24.3px;font-weight:400;color:#111;">03 Building Plans</div>
<div class="a" style="left:2690px;top:2046px;width:690px;height:43px;background:#e1e1e1;border:2px solid #adadad"></div>
<div class="t" style="left:2835.0px;width:400px;text-align:center;top:2055.2px;font-size:24.3px;font-weight:400;color:#111;">Settings...</div>
<svg class="a" style="left:3012px;top:2108px;" width="36" height="30" viewBox="0 0 36 30"><path d="M2,20 V2 H28 V6" fill="none" stroke="#27323c" stroke-width="2.4"/><rect x="7.5" y="8" width="27" height="20" fill="none" stroke="#27323c" stroke-width="2.6"/><path d="M7.5,13 H34" stroke="#27323c" stroke-width="2.6"/></svg>
<div class="a" style="left:3055px;top:2102px;width:2px;height:42px;background:#d0d0d0"></div>
<div class="a" style="left:3334px;top:2102px;width:2px;height:42px;background:#d0d0d0"></div>
<div class="t" style="left:3090px;top:2108.4px;font-size:27px;font-weight:700;color:#444;letter-spacing:0.2px">GRAPHISOFT <span style="font-weight:400;color:#777">ID</span></div>
<div class="t" style="left:1453px;top:209.1px;font-size:23.6px;font-weight:400;color:#111;">lumn [04-SCP...</div>
<svg class="a" style="left:1668px;top:206px;" width="40" height="31" viewBox="0 0 40 31"><path d="M2,2 H30 L38,9 V29 H2 Z" fill="#fff" stroke="#27323c" stroke-width="2.4"/><path d="M30,2 V9 H38" fill="none" stroke="#27323c" stroke-width="2"/><path d="M8,24 L20,12 L24,16 L12,28 Z M10,27 H32" fill="none" stroke="#27323c" stroke-width="2"/></svg>
<div class="t" style="left:1712px;top:208.9px;font-size:23.9px;font-weight:400;color:#111;">[F.01 Fotos Exterior]</div>
<svg class="a" style="left:2124px;top:208px;" width="40" height="29" viewBox="0 0 40 29"><rect x="1.5" y="1.5" width="37" height="26" rx="2" fill="#fff" stroke="#3d4a55" stroke-width="2.4"/><path d="M24,27 V18 H38 M24,22.5 H38" fill="none" stroke="#3d4a55" stroke-width="2.2"/></svg>
<div class="t" style="left:2170px;top:209.4px;font-size:23px;font-weight:400;color:#111;">[A.02 Plano]</div>
<svg class="a" style="left:2594px;top:208px;" width="48" height="30" viewBox="0 0 48 30"><path d="M2,26 V13 L12,2 L24,7 L32,15 V26 Z M20,26 V13 L12,2 M20,13 H32" fill="none" stroke="#27323c" stroke-width="2.4"/><path d="M36,18 V28 M40,19 H46 M40,25 H46" stroke="#27323c" stroke-width="2.6"/></svg>
<svg class="a" style="left:2658px;top:218px;" width="16" height="9" viewBox="0 0 16 9"><polygon points="0,0 16,0 8,9" fill="#333"/></svg>
<div class="a" style="left:1486px;top:19px;width:2px;height:35px;background:#8a8a8a"></div>
<div class="a" style="left:1815px;top:19px;width:2px;height:35px;background:#8a8a8a"></div>
<div class="a" style="left:1940px;top:19px;width:2px;height:35px;background:#8a8a8a"></div>
<div class="a" style="left:2235px;top:19px;width:2px;height:35px;background:#8a8a8a"></div>
<div class="a" style="left:2377px;top:19px;width:2px;height:35px;background:#8a8a8a"></div>
<div class="a" style="left:2627px;top:19px;width:2px;height:35px;background:#8a8a8a"></div>
<svg class="a" style="left:1452px;top:19px;" width="20" height="22" viewBox="0 0 20 22"><path d="M2,18 C12,18 16,12 16,2" fill="none" stroke="#2f7de1" stroke-width="2.4"/><path d="M0,8 C6,8 8,5 8,0" fill="none" stroke="#2d3740" stroke-width="2"/></svg>
<svg class="a" style="left:1505px;top:19px;" width="40" height="24" viewBox="0 0 40 24"><path d="M3,4 V16 L20,20 L37,16 V4 M20,4 V24 M3,10 H37" fill="none" stroke="#a9adb0" stroke-width="2.2"/><circle cx="20" cy="6" r="4" fill="none" stroke="#a9adb0" stroke-width="2"/></svg>
<svg class="a" style="left:1567px;top:19px;" width="40" height="24" viewBox="0 0 40 24"><path d="M2,10 V22 H10 M30,22 H38 V10 M10,18 V4 H30 V18 M16,18 V8 H24 V18" fill="none" stroke="#2d3740" stroke-width="2.4"/></svg>
<svg class="a" style="left:1630px;top:19px;" width="40" height="24" viewBox="0 0 40 24"><path d="M2,2 H10 M30,2 H38 M20,2 V14 M8,22 L20,12 L32,22 M10,10 H30" fill="none" stroke="#2d3740" stroke-width="2.4"/><circle cx="20" cy="6" r="4" fill="none" stroke="#2d3740" stroke-width="2.2"/></svg>
<svg class="a" style="left:1698px;top:19px;" width="30" height="25" viewBox="0 0 30 25"><path d="M2,16 L8,4 L20,0 L28,8 L24,18 L12,23 Z M2,16 L18,14 L28,8 M18,14 L12,23" fill="none" stroke="#2d3740" stroke-width="2.2"/></svg>
<svg class="a" style="left:1755px;top:19px;" width="40" height="22" viewBox="0 0 40 22"><path d="M2,2 L20,20 L38,2 M20,2 V20" fill="none" stroke="#d0d2d4" stroke-width="2.2"/></svg>
<svg class="a" style="left:1846px;top:19px;" width="36" height="23" viewBox="0 0 36 23"><path d="M2,0 V14 H18" fill="none" stroke="#2d3740" stroke-width="2.4"/><rect x="13" y="5" width="22" height="17" rx="2" fill="#fff" stroke="#2f7de1" stroke-width="2.4"/><path d="M17,11 H19 M22,11 H31 M17,16 H19 M22,16 H31" stroke="#2f7de1" stroke-width="2"/></svg>
<svg class="a" style="left:1911px;top:19px;" width="16" height="8" viewBox="0 0 16 8"><polygon points="0,0 16,0 8,8" fill="#222"/></svg>
<svg class="a" style="left:2036px;top:19px;" width="16" height="8" viewBox="0 0 16 8"><polygon points="0,0 16,0 8,8" fill="#222"/></svg>
<svg class="a" style="left:2207px;top:19px;" width="16" height="8" viewBox="0 0 16 8"><polygon points="0,0 16,0 8,8" fill="#222"/></svg>
<svg class="a" style="left:2474px;top:19px;" width="16" height="8" viewBox="0 0 16 8"><polygon points="0,0 16,0 8,8" fill="#222"/></svg>
<svg class="a" style="left:1969px;top:19px;" width="37" height="24" viewBox="0 0 37 24"><path d="M6,4 H30 M6,4 V20 M30,4 V20 M6,20 H30" fill="none" stroke="#2d3740" stroke-width="3"/><rect x="2" y="0" width="8" height="8" fill="#2d3740"/><rect x="26" y="0" width="8" height="8" fill="#2d3740"/><rect x="2" y="16" width="8" height="8" fill="#2d3740"/><rect x="26" y="16" width="8" height="8" fill="#2d3740"/><path d="M0,2 L4,6" stroke="#999" stroke-width="2"/></svg>
<svg class="a" style="left:2068px;top:19px;" width="34" height="25" viewBox="0 0 34 25"><path d="M2,0 V14 L12,18 H20 M12,18 V4" fill="none" stroke="#2d3740" stroke-width="2.2"/><path d="M16,8 H32 L26,16 V24 L22,22 V16 Z" fill="none" stroke="#2f7de1" stroke-width="2.2"/></svg>
<svg class="a" style="left:2138px;top:19px;" width="40" height="24" viewBox="0 0 40 24"><path d="M2,0 V12 H24" fill="none" stroke="#2d3740" stroke-width="2.4"/><path d="M4,2 L22,22 L38,6" fill="none" stroke="#2f7de1" stroke-width="2.6"/><path d="M14,0 L26,8 H36" fill="none" stroke="#2d3740" stroke-width="2.2"/></svg>
<svg class="a" style="left:2256px;top:19px;" width="34" height="25" viewBox="0 0 34 25"><path d="M6,0 V18 M30,0 V18 M6,6 H30" fill="none" stroke="#2d3740" stroke-width="2.4"/><path d="M2,22 L6,18 H32 L28,22 Z" fill="#2d3740"/></svg>
<svg class="a" style="left:2317px;top:19px;" width="40" height="25" viewBox="0 0 40 25"><path d="M14,12 V22 M38,0 V18 M14,6 H38" fill="none" stroke="#2d3740" stroke-width="2.4"/><path d="M2,22 L6,18 H38 L34,24 H2 Z" fill="#2d3740"/><path d="M2,2 C2,8 10,8 10,2" fill="none" stroke="#2d3740" stroke-width="2"/></svg>
<svg class="a" style="left:2405px;top:19px;" width="40" height="19" viewBox="0 0 40 19"><path d="M2,0 V17 H38 V0" fill="none" stroke="#2d3740" stroke-width="2.4"/><path d="M12,0 C12,12 28,12 28,0" fill="none" stroke="#2d3740" stroke-width="2.4"/></svg>
<svg class="a" style="left:2504px;top:19px;" width="40" height="25" viewBox="0 0 40 25"><path d="M2,0 V12 H14" fill="none" stroke="#2d3740" stroke-width="2.4"/><rect x="16" y="6" width="22" height="17" rx="2" fill="#fff" stroke="#2f7de1" stroke-width="2.4"/><path d="M20,12 H22 M25,12 H34 M20,17 H22 M25,17 H34" stroke="#2f7de1" stroke-width="2"/><path d="M8,0 C8,6 14,8 18,6" fill="none" stroke="#2d3740" stroke-width="2"/></svg>
<svg class="a" style="left:2566px;top:19px;" width="40" height="25" viewBox="0 0 40 25"><path d="M10,4 V16 H30 V4 M16,16 V6 H24 V16" fill="none" stroke="#2d3740" stroke-width="2.4"/><path d="M2,8 L6,2 M34,2 L38,8 M12,16 V24 M28,16 V24" fill="none" stroke="#2f7de1" stroke-width="2.2"/></svg>
<svg class="a" style="left:2648px;top:19px;" width="36" height="22" viewBox="0 0 36 22"><path d="M2,0 V12 H26 V0" fill="none" stroke="#2d3740" stroke-width="2.4"/><path d="M26,4 L32,0 V10 L26,6" fill="none" stroke="#2d3740" stroke-width="2"/><path d="M0,20 C4,18 6,16 8,14" stroke="#2f7de1" stroke-width="2.2"/></svg>
<svg class="a" style="left:2710px;top:19px;" width="36" height="26" viewBox="0 0 36 26"><path d="M6,10 L18,4 L30,10 V20 L18,24 L6,20 Z M6,10 L18,14 L30,10 M18,14 V24" fill="none" stroke="#2d3740" stroke-width="2.2"/><path d="M2,0 L12,8" stroke="#2d3740" stroke-width="2"/><path d="M22,24 L32,22" stroke="#999" stroke-width="3"/></svg>
<svg class="a" style="left:1469px;top:2064px;" width="33" height="24" viewBox="0 0 33 24"><rect x="1.5" y="1.5" width="30" height="21" fill="none" stroke="#27323c" stroke-width="2.4"/><rect x="8" y="7.5" width="17" height="9" fill="none" stroke="#27323c" stroke-width="2.2"/></svg>
<div class="t" style="left:1532px;top:2064.7px;font-size:24.3px;font-weight:400;color:#111;">03 Building Plans</div>
<svg class="a" style="left:1737px;top:2068px;" width="10" height="15" viewBox="0 0 10 15"><polygon points="0,0 10,7.5 0,15" fill="#333"/></svg>
<svg class="a" style="left:1778px;top:2062px;" width="30" height="28" viewBox="0 0 30 28"><path d="M12,10 H2 V22 H12" fill="none" stroke="#27323c" stroke-width="2.4"/><rect x="14" y="14" width="14" height="13" fill="#8a9096" stroke="#27323c" stroke-width="2"/><path d="M14,6 C18,1 24,1 26,8 M23,6 L26,9 L29,5" fill="none" stroke="#27323c" stroke-width="2"/></svg>
<div class="t" style="left:1864px;top:2064.7px;font-size:24.3px;font-weight:400;color:#111;">No Overrides</div>
<svg class="a" style="left:2044px;top:2068px;" width="10" height="15" viewBox="0 0 10 15"><polygon points="0,0 10,7.5 0,15" fill="#333"/></svg>
<svg class="a" style="left:2084px;top:2062px;" width="33" height="28" viewBox="0 0 33 28"><path d="M2,26 L18,12 M2,26 H16" fill="none" stroke="#8a9096" stroke-width="2"/><path d="M14,26 V4 L30,18 V26 Z M20,26 V18 H25 V26" fill="none" stroke="#27323c" stroke-width="2.2"/></svg>
<div class="t" style="left:2137px;top:2064.7px;font-size:24.3px;font-weight:400;color:#111;">00 Show All Elem...</div>
<svg class="a" style="left:2353px;top:2068px;" width="10" height="15" viewBox="0 0 10 15"><polygon points="0,0 10,7.5 0,15" fill="#333"/></svg>
<svg class="a" style="left:2396px;top:2064px;" width="26" height="25" viewBox="0 0 26 25"><path d="M2,8 H16 V23 H2 Z M2,8 L8,2 H24 L16,8 M24,2 V16 L16,23" fill="none" stroke="#27323c" stroke-width="2.2"/></svg>
<div class="t" style="left:2464px;top:2064.7px;font-size:24.3px;font-weight:400;color:#111;">Simple Shading</div>
<svg class="a" style="left:2660px;top:2068px;" width="10" height="15" viewBox="0 0 10 15"><polygon points="0,0 10,7.5 0,15" fill="#333"/></svg>
<svg class="a" style="left:1452px;top:245px;" width="1230" height="1811" viewBox="1452 245 1230 1811"><polygon points="1729.8,850.3 1766.5,846.7 1771.7,837.2 1802.1,836.2 1803.2,858.2 1809.4,866.1 1808.4,889.6 1804.2,905.4 1804.2,1036.4 1772.8,965.6 1765.4,973.5 1742.9,1007.6 1729.8,1015.4 1725.6,994.5 1740.3,984.0 1735.0,963.0 1723.5,936.8 1718.2,915.8 1728.7,892.3 1732.4,853.0" fill="none" stroke="#1a5fd8" stroke-width="3.2" stroke-linejoin="round"/></svg>
<svg class="a" style="left:1790px;top:1415px;" width="42" height="36" viewBox="0 0 42 36"><polygon points="3,33 21,4 39,33" fill="#cfc8b8" stroke="#e2e2e2" stroke-width="2"/></svg>
<svg class="a" style="left:1848px;top:1286px;" width="36" height="34" viewBox="0 0 36 34"><path d="M2,32 L33,3" stroke="#dddddd" stroke-width="3"/></svg>
<svg class="a" style="left:1380px;top:900px;" width="340" height="300" viewBox="1380 900 340 300"><path d="M1381,1181 H1523 V921 H1698" fill="none" stroke="#1f2733" stroke-width="2.6"/></svg>
<svg class="a" style="left:1355px;top:1155px;" width="52" height="52" viewBox="0 0 52 52"><polygon points="26,1 51,26 26,51 1,26" fill="#252c38"/></svg>
<svg class="a" style="left:1681px;top:904px;" width="35" height="35" viewBox="0 0 35 35"><polygon points="17.5,0 35,17.5 17.5,35 0,17.5" fill="#252c38"/></svg>
<div class="a" style="left:637px;top:1244px;width:240px;height:37px;background:rgba(0,0,0,0.28);filter:blur(2px)"></div>
<div class="a" style="left:631px;top:1239px;width:240px;height:36px;background:#fff;border:2px solid #767676"></div>
<div class="t" style="left:644px;top:1244.6px;font-size:24.5px;font-weight:400;color:#555;">Informations Decay</div>
<div class="a" style="left:1853px;top:781px;width:872px;height:211px;border-bottom:2px solid rgba(90,140,240,0.45);border-right:2px solid rgba(90,140,240,0.45);border-radius:13px"></div>
<div class="a" style="left:1850px;top:777px;width:873px;height:211px;background:rgba(255,255,255,0.76);border:2px solid #6d9bf1;border-radius:13px"></div>
<div class="t" style="left:1859.5px;top:790.9px;font-size:23px;font-weight:700;color:#2266ec;">Morph</div>
<div class="t" style="left:1859.5px;top:823.6px;font-size:23px;font-weight:400;color:#2266ec;">Elevation: 7,175</div>
<div class="t" style="left:1859.5px;top:853.8px;font-size:22.9px;font-weight:400;color:#2266ec;">Layer: Decay / Pathology. Fracture, detachment, crack. Fracture, detachment, crack,</div>
<div class="t" style="left:1859.5px;top:886.1px;font-size:23px;font-weight:400;color:#2266ec;">Story: 1. Story</div>
<div class="t" style="left:1859.5px;top:917.8px;font-size:23px;font-weight:400;color:#2266ec;">Renovation Status: Existing</div>
<div class="a" style="left:1856px;top:947px;width:860px;height:2px;background:#6d9bf1"></div>
<div class="t" style="left:1864px;top:954.8px;font-size:23px;font-weight:400;color:#2266ec;">Multiple Elements (TAB)</div>
</body></html>
